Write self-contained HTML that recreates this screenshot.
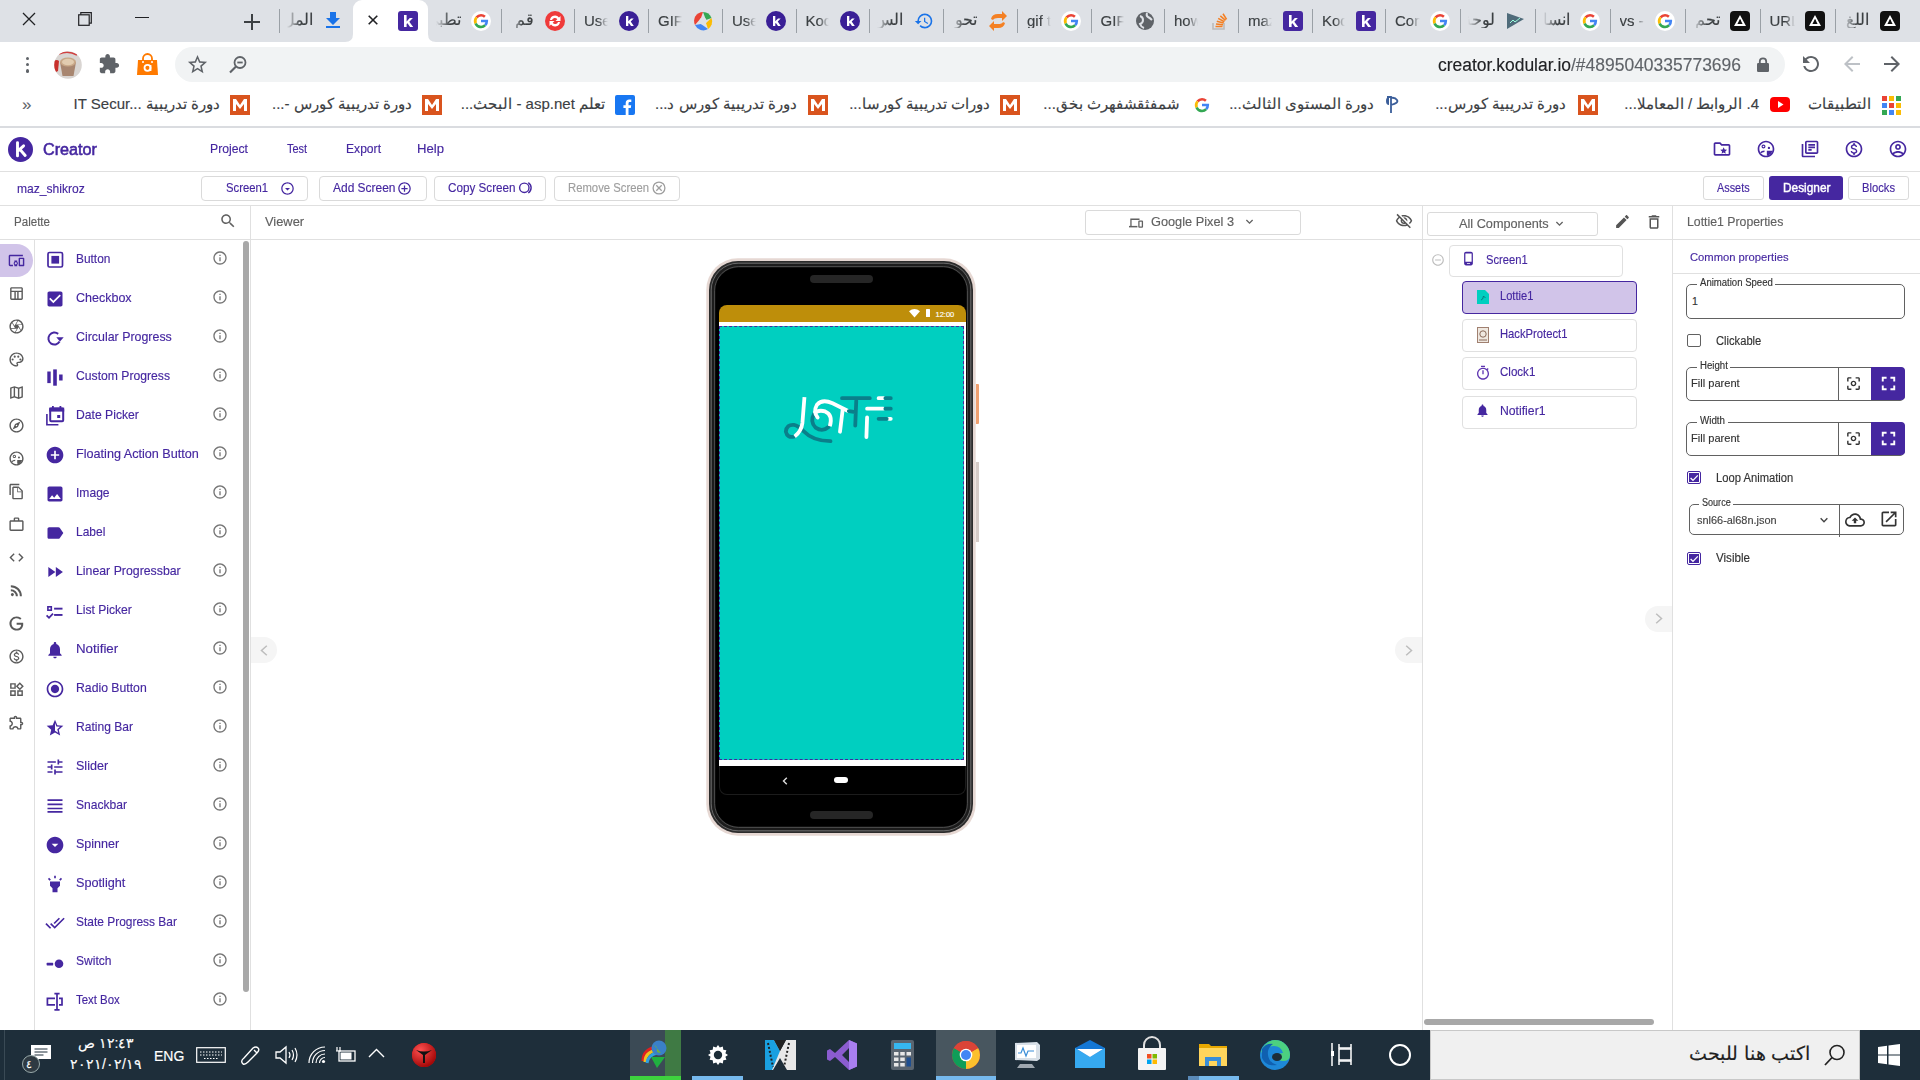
<!DOCTYPE html>
<html><head><meta charset="utf-8">
<style>
*{box-sizing:border-box;margin:0;padding:0}
html,body{width:1920px;height:1080px;overflow:hidden;background:#fff;font-family:"Liberation Sans",sans-serif;position:relative}
.a{position:absolute}
.t{position:absolute;white-space:nowrap;line-height:1;-webkit-text-stroke:0.15px currentColor}
svg{display:block;overflow:visible}
</style></head><body>
<div class="a" style="left:0px;top:0px;width:1920px;height:42px;background:#dee1e6"></div>
<svg class="a" style="left:22px;top:12px;" width="14" height="14" viewBox="0 0 14 14"><path d="M1 1l12 12M13 1L1 13" stroke="#202124" stroke-width="1.3"/></svg>
<svg class="a" style="left:78px;top:12px;" width="14" height="14" viewBox="0 0 14 14"><rect x="0.7" y="2.8" width="10.5" height="10.5" fill="none" stroke="#202124" stroke-width="1.2"/><path d="M2.8 2.8V.7h10.5v10.5h-2.1" fill="none" stroke="#202124" stroke-width="1.2"/></svg>
<div class="a" style="left:135px;top:17px;width:14px;height:1.3px;background:#202124"></div>
<svg class="a" style="left:243.5px;top:13.5px;" width="16" height="16" viewBox="0 0 16 16"><path d="M8 0v16M0 8h16" stroke="#3c4043" stroke-width="2"/></svg>
<div class="a" style="left:279px;top:9px;width:1px;height:24px;background:#9aa0a6"></div>
<div class="a" style="left:500.5px;top:9px;width:1px;height:24px;background:#9aa0a6"></div>
<div class="a" style="left:574px;top:9px;width:1px;height:24px;background:#9aa0a6"></div>
<div class="a" style="left:648px;top:9px;width:1px;height:24px;background:#9aa0a6"></div>
<div class="a" style="left:722px;top:9px;width:1px;height:24px;background:#9aa0a6"></div>
<div class="a" style="left:795.5px;top:9px;width:1px;height:24px;background:#9aa0a6"></div>
<div class="a" style="left:869px;top:9px;width:1px;height:24px;background:#9aa0a6"></div>
<div class="a" style="left:943.4px;top:9px;width:1px;height:24px;background:#9aa0a6"></div>
<div class="a" style="left:1017px;top:9px;width:1px;height:24px;background:#9aa0a6"></div>
<div class="a" style="left:1090.6px;top:9px;width:1px;height:24px;background:#9aa0a6"></div>
<div class="a" style="left:1164px;top:9px;width:1px;height:24px;background:#9aa0a6"></div>
<div class="a" style="left:1238px;top:9px;width:1px;height:24px;background:#9aa0a6"></div>
<div class="a" style="left:1312px;top:9px;width:1px;height:24px;background:#9aa0a6"></div>
<div class="a" style="left:1385px;top:9px;width:1px;height:24px;background:#9aa0a6"></div>
<div class="a" style="left:1459.5px;top:9px;width:1px;height:24px;background:#9aa0a6"></div>
<div class="a" style="left:1534.5px;top:9px;width:1px;height:24px;background:#9aa0a6"></div>
<div class="a" style="left:1609.5px;top:9px;width:1px;height:24px;background:#9aa0a6"></div>
<div class="a" style="left:1684.5px;top:9px;width:1px;height:24px;background:#9aa0a6"></div>
<div class="a" style="left:1759.5px;top:9px;width:1px;height:24px;background:#9aa0a6"></div>
<div class="a" style="left:1834.5px;top:9px;width:1px;height:24px;background:#9aa0a6"></div>
<div class="a" style="left:352.5px;top:0;width:75px;height:42px;background:#fff;border-radius:9px 9px 0 0"></div>
<svg class="a" style="left:344.5px;top:34px;" width="8" height="8" viewBox="0 0 8 8"><path d="M0 8Q8 8 8 0V8z" fill="#fff"/></svg>
<svg class="a" style="left:427.5px;top:34px;" width="8" height="8" viewBox="0 0 8 8"><path d="M8 8Q0 8 0 0V8z" fill="#fff"/></svg>
<svg class="a" style="left:325.0px;top:12px;" width="16" height="16" viewBox="0 0 16 16"><path d="M5 0h6v6h4l-7 7-7-7h4z" fill="#1a73e8"/><rect x="1" y="14" width="14" height="2" fill="#1a73e8"/></svg>
<div class="t" style="left:287px;top:12px;width:25.5px;font-size:16px;color:#3c4043;direction:rtl;text-align:right;overflow:hidden;-webkit-mask-image:linear-gradient(to right,transparent,#000 14px)">المل</div>
<svg class="a" style="left:398.0px;top:11px;" width="20" height="20" viewBox="0 0 20 20"><rect width="20" height="20" rx="3" fill="#4527a0"/><path d="M6 4h2.6v6.4L11.8 7h3.1l-3.6 3.7L15.2 16h-3.1l-2.6-3.8-.9.9V16H6z" fill="#fff"/></svg>
<svg class="a" style="left:471.0px;top:11px;" width="20" height="20" viewBox="0 0 20 20"><circle cx="10" cy="10" r="10" fill="#fff"/>
<path d="M10 4.2a5.8 5.8 0 0 1 3.9 1.5" fill="none" stroke="#ea4335" stroke-width="2.6"/>
<path d="M5.6 6.3a5.8 5.8 0 0 1 4.4-2.1" fill="none" stroke="#ea4335" stroke-width="2.6"/>
<path d="M4.6 12.4a5.8 5.8 0 0 1 1-6.1" fill="none" stroke="#fbbc05" stroke-width="2.6"/>
<path d="M14.2 14.1a5.8 5.8 0 0 1-9.6-1.7" fill="none" stroke="#34a853" stroke-width="2.6"/>
<path d="M10 10h5.8a5.8 5.8 0 0 1-1.6 4.1" fill="none" stroke="#4285f4" stroke-width="2.6"/></svg>
<div class="t" style="left:435.5px;top:12px;width:25.0px;font-size:16px;color:#3c4043;direction:rtl;text-align:right;overflow:hidden;-webkit-mask-image:linear-gradient(to right,transparent,#000 14px)">تطبي</div>
<svg class="a" style="left:544.5px;top:11px;" width="20" height="20" viewBox="0 0 20 20"><circle cx="10" cy="10" r="10" fill="#ef3a3a"/><path d="M5 9a5 5 0 0 1 9-2.5l1.5-1.5v5h-5l1.8-1.8A3 3 0 0 0 7 9zm10 2a5 5 0 0 1-9 2.5L4.5 15v-5h5l-1.8 1.8A3 3 0 0 0 13 11z" fill="#fff"/></svg>
<div class="t" style="left:508.5px;top:12px;width:25.5px;font-size:16px;color:#3c4043;direction:rtl;text-align:right;overflow:hidden;-webkit-mask-image:linear-gradient(to right,transparent,#000 14px)">قم ب</div>
<svg class="a" style="left:618.5px;top:11px;" width="20" height="20" viewBox="0 0 20 20"><circle cx="10" cy="10" r="10" fill="#3a1f96"/><path d="M7 5h2.3v5.3L12 7.6h2.7l-3 3L14.8 15H12l-2.1-3.1-.6.6V15H7z" fill="#fff"/></svg>
<div class="t" style="left:584px;top:13px;width:24px;font-size:15px;color:#3c4043;overflow:hidden;-webkit-mask-image:linear-gradient(to left,transparent,#000 10px)">Use</div>
<svg class="a" style="left:692.5px;top:11px;" width="20" height="20" viewBox="0 0 20 20"><path d="M10 1a9 9 0 0 1 8.5 6L13 9z" fill="#34a853"/><path d="M18.5 7A9 9 0 0 1 15 18l-2-6z" fill="#fbbc05"/><path d="M15 18A9 9 0 0 1 2 14l6-1z" fill="#4285f4"/><path d="M2 14A9 9 0 0 1 10 1L8 7z" fill="#ea4335"/><circle cx="10" cy="10" r="3.5" fill="#dee1e6"/></svg>
<div class="t" style="left:658px;top:13px;width:24px;font-size:15px;color:#3c4043;overflow:hidden;-webkit-mask-image:linear-gradient(to left,transparent,#000 10px)">GIF</div>
<svg class="a" style="left:766.0px;top:11px;" width="20" height="20" viewBox="0 0 20 20"><circle cx="10" cy="10" r="10" fill="#3a1f96"/><path d="M7 5h2.3v5.3L12 7.6h2.7l-3 3L14.8 15H12l-2.1-3.1-.6.6V15H7z" fill="#fff"/></svg>
<div class="t" style="left:732px;top:13px;width:23.5px;font-size:15px;color:#3c4043;overflow:hidden;-webkit-mask-image:linear-gradient(to left,transparent,#000 10px)">Use</div>
<svg class="a" style="left:839.5px;top:11px;" width="20" height="20" viewBox="0 0 20 20"><circle cx="10" cy="10" r="10" fill="#3a1f96"/><path d="M7 5h2.3v5.3L12 7.6h2.7l-3 3L14.8 15H12l-2.1-3.1-.6.6V15H7z" fill="#fff"/></svg>
<div class="t" style="left:805.5px;top:13px;width:23.5px;font-size:15px;color:#3c4043;overflow:hidden;-webkit-mask-image:linear-gradient(to left,transparent,#000 10px)">Kod</div>
<svg class="a" style="left:913.9px;top:11px;" width="20" height="20" viewBox="0 0 24 24"><path fill="#1a73e8" d="M13 3a9 9 0 0 0-9 9H1l3.89 3.89.07.14L9 12H6c0-3.87 3.13-7 7-7s7 3.13 7 7-3.13 7-7 7c-1.93 0-3.68-.79-4.94-2.06l-1.42 1.42A8.954 8.954 0 0 0 13 21a9 9 0 0 0 0-18zm-1 5v5l4.28 2.54.72-1.21-3.5-2.08V8H12z"/></svg>
<div class="t" style="left:877px;top:12px;width:26.399999999999977px;font-size:16px;color:#3c4043;direction:rtl;text-align:right;overflow:hidden;-webkit-mask-image:linear-gradient(to right,transparent,#000 14px)">الس</div>
<svg class="a" style="left:987.5px;top:11px;" width="20" height="20" viewBox="0 0 20 20"><path d="M3 8q1-5 7-5h4V0l5 5-5 5V7h-4q-4 0-5 2z" fill="#f48024"/><path d="M17 12q-1 5-7 5H6v3l-5-5 5-5v3h4q4 0 5-2z" fill="#f48024"/></svg>
<div class="t" style="left:951.4px;top:12px;width:25.600000000000023px;font-size:16px;color:#3c4043;direction:rtl;text-align:right;overflow:hidden;-webkit-mask-image:linear-gradient(to right,transparent,#000 14px)">تحو</div>
<svg class="a" style="left:1061.1px;top:11px;" width="20" height="20" viewBox="0 0 20 20"><circle cx="10" cy="10" r="10" fill="#fff"/>
<path d="M10 4.2a5.8 5.8 0 0 1 3.9 1.5" fill="none" stroke="#ea4335" stroke-width="2.6"/>
<path d="M5.6 6.3a5.8 5.8 0 0 1 4.4-2.1" fill="none" stroke="#ea4335" stroke-width="2.6"/>
<path d="M4.6 12.4a5.8 5.8 0 0 1 1-6.1" fill="none" stroke="#fbbc05" stroke-width="2.6"/>
<path d="M14.2 14.1a5.8 5.8 0 0 1-9.6-1.7" fill="none" stroke="#34a853" stroke-width="2.6"/>
<path d="M10 10h5.8a5.8 5.8 0 0 1-1.6 4.1" fill="none" stroke="#4285f4" stroke-width="2.6"/></svg>
<div class="t" style="left:1027px;top:13px;width:23.59999999999991px;font-size:15px;color:#3c4043;overflow:hidden;-webkit-mask-image:linear-gradient(to left,transparent,#000 10px)">gif t</div>
<svg class="a" style="left:1134.5px;top:11px;" width="20" height="20" viewBox="0 0 20 20"><circle cx="10" cy="10" r="9" fill="#5f6368"/><path d="M5 5q3 1 3 4t-3 4q1 3 4 4M12 2q-1 3 1 4t4 3" fill="none" stroke="#dee1e6" stroke-width="2"/></svg>
<div class="t" style="left:1100.6px;top:13px;width:23.40000000000009px;font-size:15px;color:#3c4043;overflow:hidden;-webkit-mask-image:linear-gradient(to left,transparent,#000 10px)">GIF</div>
<svg class="a" style="left:1208.5px;top:11px;" width="20" height="20" viewBox="0 0 20 20"><path d="M4 12v6h11v-6" fill="none" stroke="#bcbbbb" stroke-width="1.6"/><path d="M6.5 15.5h7M7 13l7 .7M7.8 10.2l6.8 1.8M9.2 7.4l6.2 3.4M11.3 4.8l5.2 4.6M14 2.8l3.6 5.6" stroke="#f48024" stroke-width="1.6"/></svg>
<div class="t" style="left:1174px;top:13px;width:24px;font-size:15px;color:#3c4043;overflow:hidden;-webkit-mask-image:linear-gradient(to left,transparent,#000 10px)">how</div>
<svg class="a" style="left:1282.5px;top:11px;" width="20" height="20" viewBox="0 0 20 20"><rect width="20" height="20" rx="3" fill="#4527a0"/><path d="M6 4h2.6v6.4L11.8 7h3.1l-3.6 3.7L15.2 16h-3.1l-2.6-3.8-.9.9V16H6z" fill="#fff"/></svg>
<div class="t" style="left:1248px;top:13px;width:24px;font-size:15px;color:#3c4043;overflow:hidden;-webkit-mask-image:linear-gradient(to left,transparent,#000 10px)">maz</div>
<svg class="a" style="left:1355.5px;top:11px;" width="20" height="20" viewBox="0 0 20 20"><rect width="20" height="20" rx="3" fill="#4527a0"/><path d="M6 4h2.6v6.4L11.8 7h3.1l-3.6 3.7L15.2 16h-3.1l-2.6-3.8-.9.9V16H6z" fill="#fff"/></svg>
<div class="t" style="left:1322px;top:13px;width:23px;font-size:15px;color:#3c4043;overflow:hidden;-webkit-mask-image:linear-gradient(to left,transparent,#000 10px)">Kod</div>
<svg class="a" style="left:1430.0px;top:11px;" width="20" height="20" viewBox="0 0 20 20"><circle cx="10" cy="10" r="10" fill="#fff"/>
<path d="M10 4.2a5.8 5.8 0 0 1 3.9 1.5" fill="none" stroke="#ea4335" stroke-width="2.6"/>
<path d="M5.6 6.3a5.8 5.8 0 0 1 4.4-2.1" fill="none" stroke="#ea4335" stroke-width="2.6"/>
<path d="M4.6 12.4a5.8 5.8 0 0 1 1-6.1" fill="none" stroke="#fbbc05" stroke-width="2.6"/>
<path d="M14.2 14.1a5.8 5.8 0 0 1-9.6-1.7" fill="none" stroke="#34a853" stroke-width="2.6"/>
<path d="M10 10h5.8a5.8 5.8 0 0 1-1.6 4.1" fill="none" stroke="#4285f4" stroke-width="2.6"/></svg>
<div class="t" style="left:1395px;top:13px;width:24.5px;font-size:15px;color:#3c4043;overflow:hidden;-webkit-mask-image:linear-gradient(to left,transparent,#000 10px)">Con</div>
<svg class="a" style="left:1505.0px;top:11px;" width="20" height="20" viewBox="0 0 20 20"><path d="M2 2l17 6-17 10z" fill="#4f6b7a"/><path d="M5 12l3-3 2 2 5-4" fill="none" stroke="#9fd" stroke-width="1"/></svg>
<div class="t" style="left:1467.5px;top:12px;width:27.0px;font-size:16px;color:#3c4043;direction:rtl;text-align:right;overflow:hidden;-webkit-mask-image:linear-gradient(to right,transparent,#000 14px)">لوحة</div>
<svg class="a" style="left:1580.0px;top:11px;" width="20" height="20" viewBox="0 0 20 20"><circle cx="10" cy="10" r="10" fill="#fff"/>
<path d="M10 4.2a5.8 5.8 0 0 1 3.9 1.5" fill="none" stroke="#ea4335" stroke-width="2.6"/>
<path d="M5.6 6.3a5.8 5.8 0 0 1 4.4-2.1" fill="none" stroke="#ea4335" stroke-width="2.6"/>
<path d="M4.6 12.4a5.8 5.8 0 0 1 1-6.1" fill="none" stroke="#fbbc05" stroke-width="2.6"/>
<path d="M14.2 14.1a5.8 5.8 0 0 1-9.6-1.7" fill="none" stroke="#34a853" stroke-width="2.6"/>
<path d="M10 10h5.8a5.8 5.8 0 0 1-1.6 4.1" fill="none" stroke="#4285f4" stroke-width="2.6"/></svg>
<div class="t" style="left:1542.5px;top:12px;width:27.0px;font-size:16px;color:#3c4043;direction:rtl;text-align:right;overflow:hidden;-webkit-mask-image:linear-gradient(to right,transparent,#000 14px)">انسا</div>
<svg class="a" style="left:1655.0px;top:11px;" width="20" height="20" viewBox="0 0 20 20"><circle cx="10" cy="10" r="10" fill="#fff"/>
<path d="M10 4.2a5.8 5.8 0 0 1 3.9 1.5" fill="none" stroke="#ea4335" stroke-width="2.6"/>
<path d="M5.6 6.3a5.8 5.8 0 0 1 4.4-2.1" fill="none" stroke="#ea4335" stroke-width="2.6"/>
<path d="M4.6 12.4a5.8 5.8 0 0 1 1-6.1" fill="none" stroke="#fbbc05" stroke-width="2.6"/>
<path d="M14.2 14.1a5.8 5.8 0 0 1-9.6-1.7" fill="none" stroke="#34a853" stroke-width="2.6"/>
<path d="M10 10h5.8a5.8 5.8 0 0 1-1.6 4.1" fill="none" stroke="#4285f4" stroke-width="2.6"/></svg>
<div class="t" style="left:1619.5px;top:13px;width:25.0px;font-size:15px;color:#3c4043;overflow:hidden;-webkit-mask-image:linear-gradient(to left,transparent,#000 10px)">vs -</div>
<svg class="a" style="left:1730.0px;top:11px;" width="20" height="20" viewBox="0 0 20 20"><rect width="20" height="20" rx="4" fill="#111"/><path d="M10 4l6 11H4zm0 4l-2.6 5h5.2z" fill="#fff"/><path d="M10 8l1.2 2.2-2.4 2.8z" fill="#111"/></svg>
<div class="t" style="left:1692.5px;top:12px;width:27.0px;font-size:16px;color:#3c4043;direction:rtl;text-align:right;overflow:hidden;-webkit-mask-image:linear-gradient(to right,transparent,#000 14px)">تحم</div>
<svg class="a" style="left:1805.0px;top:11px;" width="20" height="20" viewBox="0 0 20 20"><rect width="20" height="20" rx="4" fill="#111"/><path d="M10 4l6 11H4zm0 4l-2.6 5h5.2z" fill="#fff"/><path d="M10 8l1.2 2.2-2.4 2.8z" fill="#111"/></svg>
<div class="t" style="left:1769.5px;top:13px;width:25.0px;font-size:15px;color:#3c4043;overflow:hidden;-webkit-mask-image:linear-gradient(to left,transparent,#000 10px)">URL</div>
<svg class="a" style="left:1879.5px;top:11px;" width="20" height="20" viewBox="0 0 20 20"><rect width="20" height="20" rx="4" fill="#111"/><path d="M10 4l6 11H4zm0 4l-2.6 5h5.2z" fill="#fff"/><path d="M10 8l1.2 2.2-2.4 2.8z" fill="#111"/></svg>
<div class="t" style="left:1842.5px;top:12px;width:26.5px;font-size:16px;color:#3c4043;direction:rtl;text-align:right;overflow:hidden;-webkit-mask-image:linear-gradient(to right,transparent,#000 14px)">اللغ</div>
<svg class="a" style="left:368px;top:15px;" width="10" height="10" viewBox="0 0 10 10"><path d="M.7.7l8.6 8.6M9.3.7L.7 9.3" stroke="#202124" stroke-width="1.6"/></svg>
<div class="a" style="left:0px;top:42px;width:1920px;height:44px;background:#fff"></div>
<div class="a" style="left:25.7px;top:56.8px;width:3.4px;height:3.4px;background:#5f6368;border-radius:50%"></div>
<div class="a" style="left:25.7px;top:62.8px;width:3.4px;height:3.4px;background:#5f6368;border-radius:50%"></div>
<div class="a" style="left:25.7px;top:69.2px;width:3.4px;height:3.4px;background:#5f6368;border-radius:50%"></div>
<svg class="a" style="left:54px;top:51px;" width="28" height="28" viewBox="0 0 28 28"><defs><clipPath id="av"><circle cx="14" cy="14" r="13.8"/></clipPath></defs><g clip-path="url(#av)"><rect width="28" height="28" fill="#d9d5d2"/><path d="M0 10q3-2 5 0l-1 10-4 2z" fill="#c9302c"/><path d="M5 3q9-4 18 1" stroke="#d04040" stroke-width="1.5" fill="none"/><path d="M6 11l2.5 14h11l2.5-14z" fill="#a88670"/><ellipse cx="14" cy="11" rx="8" ry="4.5" fill="#c8a888"/><ellipse cx="14" cy="11" rx="6" ry="3.2" fill="#e2ccb0"/></g></svg>
<svg class="a" style="left:98px;top:53px;" width="22" height="22" viewBox="0 0 24 24"><path fill="#5f6368" d="M20.5 11H19V7c0-1.1-.9-2-2-2h-4V3.5C13 2.12 11.88 1 10.5 1S8 2.12 8 3.5V5H4c-1.1 0-1.99.9-1.99 2v3.8H3.5c1.49 0 2.7 1.21 2.7 2.7s-1.21 2.7-2.7 2.7H2V20c0 1.1.9 2 2 2h3.8v-1.5c0-1.49 1.21-2.7 2.7-2.7 1.49 0 2.7 1.21 2.7 2.7V22H17c1.1 0 2-.9 2-2v-4h1.5c1.38 0 2.5-1.12 2.5-2.5S21.88 11 20.5 11z"/></svg>
<svg class="a" style="left:137px;top:54px;" width="21" height="21" viewBox="0 0 21 21"><path d="M1 6h19l1 15H0z" fill="#ff7a00"/><path d="M6 7V4.5a4.5 4.5 0 0 1 9 0V7" fill="none" stroke="#ff7a00" stroke-width="1.8"/><circle cx="6" cy="8" r="1" fill="#fff"/><circle cx="15" cy="8" r="1" fill="#fff"/><circle cx="10.5" cy="13.8" r="3" fill="none" stroke="#fff" stroke-width="1.8"/><path d="M13.5 11v6" stroke="#fff" stroke-width="1.8"/></svg>
<div class="a" style="left:175px;top:47px;width:1610px;height:35px;background:#f1f3f4;border-radius:17.5px"></div>
<svg class="a" style="left:186px;top:53px;" width="23" height="23" viewBox="0 0 24 24"><path fill="#5f6368" d="M22 9.24l-7.19-.62L12 2 9.19 8.63 2 9.24l5.46 4.73L5.82 21 12 17.27 18.18 21l-1.63-7.03L22 9.24zM12 15.4l-3.76 2.27 1-4.28-3.32-2.88 4.38-.38L12 6.1l1.71 4.04 4.38.38-3.32 2.88 1 4.28L12 15.4z"/></svg>
<svg class="a" style="left:229px;top:56px;" width="18" height="17" viewBox="0 0 18 17"><circle cx="11" cy="6.5" r="5.5" fill="none" stroke="#5f6368" stroke-width="1.8"/><path d="M8.3 6.5h5.4" stroke="#5f6368" stroke-width="1.8"/><path d="M7 10.5L1 16.5" stroke="#5f6368" stroke-width="2.2"/></svg>
<div class="t" style="left:1437.50px;top:56px;font-size:18px;color:#202124;font-weight:normal;transform:scaleX(0.9703);transform-origin:0 0;">creator.kodular.io<span style="color:#5f6368">/#4895040335773696</span></div>
<svg class="a" style="left:1757px;top:57px;" width="12" height="15" viewBox="0 0 12 15"><rect x="0" y="6" width="12" height="9" rx="1.2" fill="#5f6368"/><path d="M2.8 6.5V4.5a3.2 3.2 0 0 1 6.4 0v2" fill="none" stroke="#5f6368" stroke-width="1.8"/></svg>
<svg class="a" style="left:1799px;top:52px;transform:scaleX(-1)" width="24" height="24" viewBox="0 0 24 24"><path fill="#5f6368" d="M17.65 6.35A7.958 7.958 0 0 0 12 4c-4.42 0-7.99 3.58-7.99 8s3.57 8 7.99 8c3.73 0 6.84-2.55 7.73-6h-2.08A5.99 5.99 0 0 1 12 18c-3.31 0-6-2.69-6-6s2.69-6 6-6c1.66 0 3.14.69 4.22 1.78L13 11h7V4l-2.35 2.35z"/></svg>
<svg class="a" style="left:1840px;top:52px;" width="24" height="24" viewBox="0 0 24 24"><path fill="#bdc1c6" d="M20 11H7.83l5.59-5.59L12 4l-8 8 8 8 1.41-1.41L7.83 13H20v-2z"/></svg>
<svg class="a" style="left:1880px;top:52px;" width="24" height="24" viewBox="0 0 24 24"><path fill="#5f6368" d="M12 4l-1.41 1.41L16.17 11H4v2h12.17l-5.58 5.59L12 20l8-8z"/></svg>
<div class="a" style="left:0px;top:126px;width:1920px;height:2px;background:#dadce0"></div>
<div class="t" style="left:22.00px;top:96px;font-size:17px;color:#5f6368;font-weight:normal;">»</div>
<div class="t" style="right:1700px;top:96px;font-size:15px;color:#3c4043;direction:rtl"><span dir="ltr" style="unicode-bidi:isolate">IT Secur... <span dir="rtl">دورة تدريبية</span></span></div>
<svg class="a" style="left:230px;top:95px;" width="20" height="20" viewBox="0 0 20 20"><rect width="20" height="20" fill="#d9541e"/><path d="M3 16V4h3l4 6 4-6h3v12h-3V9l-4 5-4-5v7z" fill="#fff"/></svg>
<div class="t" style="right:1508px;top:96px;font-size:15px;color:#3c4043;direction:rtl">دورة تدريبية كورس -...</div>
<svg class="a" style="left:422px;top:95px;" width="20" height="20" viewBox="0 0 20 20"><rect width="20" height="20" fill="#d9541e"/><path d="M3 16V4h3l4 6 4-6h3v12h-3V9l-4 5-4-5v7z" fill="#fff"/></svg>
<div class="t" style="right:1315px;top:96px;font-size:15px;color:#3c4043;direction:rtl">تعلم asp.net - البحث...</div>
<svg class="a" style="left:615px;top:95px;" width="20" height="20" viewBox="0 0 20 20"><rect width="20" height="20" rx="2" fill="#1877f2"/><path d="M13.5 20v-7h2.3l.4-2.8h-2.7V8.5c0-.8.3-1.4 1.4-1.4h1.4V4.6c-.3 0-1.2-.1-2.1-.1-2.1 0-3.5 1.3-3.5 3.6v2.1H8.4V13h2.3v7z" fill="#fff"/></svg>
<div class="t" style="right:1123px;top:96px;font-size:15px;color:#3c4043;direction:rtl">دورة تدريبية كورس د...</div>
<svg class="a" style="left:808px;top:95px;" width="20" height="20" viewBox="0 0 20 20"><rect width="20" height="20" fill="#d9541e"/><path d="M3 16V4h3l4 6 4-6h3v12h-3V9l-4 5-4-5v7z" fill="#fff"/></svg>
<div class="t" style="right:930px;top:96px;font-size:15px;color:#3c4043;direction:rtl">دورات تدريبية كورسا...</div>
<svg class="a" style="left:1000px;top:95px;" width="20" height="20" viewBox="0 0 20 20"><rect width="20" height="20" fill="#d9541e"/><path d="M3 16V4h3l4 6 4-6h3v12h-3V9l-4 5-4-5v7z" fill="#fff"/></svg>
<div class="t" style="right:740px;top:96px;font-size:15px;color:#3c4043;direction:rtl">شمفثقشفهرث بخق...</div>
<svg class="a" style="left:1192px;top:95px;" width="20" height="20" viewBox="0 0 20 20"><circle cx="10" cy="10" r="10" fill="#fff"/>
<path d="M10 4.2a5.8 5.8 0 0 1 3.9 1.5" fill="none" stroke="#ea4335" stroke-width="2.6"/>
<path d="M5.6 6.3a5.8 5.8 0 0 1 4.4-2.1" fill="none" stroke="#ea4335" stroke-width="2.6"/>
<path d="M4.6 12.4a5.8 5.8 0 0 1 1-6.1" fill="none" stroke="#fbbc05" stroke-width="2.6"/>
<path d="M14.2 14.1a5.8 5.8 0 0 1-9.6-1.7" fill="none" stroke="#34a853" stroke-width="2.6"/>
<path d="M10 10h5.8a5.8 5.8 0 0 1-1.6 4.1" fill="none" stroke="#4285f4" stroke-width="2.6"/></svg>
<div class="t" style="right:546px;top:96px;font-size:15px;color:#3c4043;direction:rtl">دورة المستوى الثالث...</div>
<svg class="a" style="left:1385px;top:96px;" width="14" height="18" viewBox="0 0 14 18"><path d="M2 1h4v16M6 2q4-1 6 2t-6 5" fill="none" stroke="#3b5e9a" stroke-width="1.8"/><path d="M4 1v8q-3 0-3-4t3-4" fill="#3b5e9a"/></svg>
<div class="t" style="right:354px;top:96px;font-size:15px;color:#3c4043;direction:rtl">دورة تدريبية كورس...</div>
<svg class="a" style="left:1577.5px;top:95px;" width="20" height="20" viewBox="0 0 20 20"><rect width="20" height="20" fill="#d9541e"/><path d="M3 16V4h3l4 6 4-6h3v12h-3V9l-4 5-4-5v7z" fill="#fff"/></svg>
<div class="t" style="right:161px;top:96px;font-size:15px;color:#3c4043;direction:rtl">4. الروابط / المعاملا...</div>
<svg class="a" style="left:1770px;top:97px;" width="20" height="15" viewBox="0 0 20 15"><rect width="20" height="15" rx="4" fill="#f00"/><path d="M8 4l5.5 3.5L8 11z" fill="#fff"/></svg>
<div class="t" style="right:49px;top:96px;font-size:15px;color:#3c4043;direction:rtl">التطبيقات</div>
<div class="a" style="left:1882px;top:96px;width:4.5px;height:4.5px;background:#ea4335"></div>
<div class="a" style="left:1889px;top:96px;width:4.5px;height:4.5px;background:#fbbc05"></div>
<div class="a" style="left:1896px;top:96px;width:4.5px;height:4.5px;background:#34a853"></div>
<div class="a" style="left:1882px;top:103px;width:4.5px;height:4.5px;background:#4285f4"></div>
<div class="a" style="left:1889px;top:103px;width:4.5px;height:4.5px;background:#ea4335"></div>
<div class="a" style="left:1896px;top:103px;width:4.5px;height:4.5px;background:#fbbc05"></div>
<div class="a" style="left:1882px;top:110px;width:4.5px;height:4.5px;background:#34a853"></div>
<div class="a" style="left:1889px;top:110px;width:4.5px;height:4.5px;background:#4285f4"></div>
<div class="a" style="left:1896px;top:110px;width:4.5px;height:4.5px;background:#fbbc05"></div>
<div class="a" style="left:0px;top:171px;width:1920px;height:1px;background:#e0e0e0"></div>
<div class="a" style="left:8px;top:137px;width:25px;height:25px;background:#4527a0;border-radius:50%"></div>
<svg class="a" style="left:8px;top:137px;" width="25" height="25" viewBox="0 0 25 25"><path d="M9.5 5.6v13.3M10 13.8l5.6-5M11.8 12.2l5.4 6.3" fill="none" stroke="#fff" stroke-width="2.9" stroke-linecap="round" stroke-linejoin="round"/></svg>
<div class="t" style="left:43.00px;top:141px;font-size:17px;color:#4527a0;font-weight:normal;transform:scaleX(0.9526);transform-origin:0 0;-webkit-text-stroke:0.6px currentColor;">Creator</div>
<div class="t" style="left:210.00px;top:142px;font-size:13px;color:#4527a0;font-weight:normal;transform:scaleX(0.9392);transform-origin:0 0;">Project</div>
<div class="t" style="left:287.00px;top:142px;font-size:13px;color:#4527a0;font-weight:normal;transform:scaleX(0.8431);transform-origin:0 0;">Test</div>
<div class="t" style="left:346.00px;top:142px;font-size:13px;color:#4527a0;font-weight:normal;transform:scaleX(0.9315);transform-origin:0 0;">Export</div>
<div class="t" style="left:416.80px;top:142px;font-size:13px;color:#4527a0;font-weight:normal;transform:scaleX(1.0098);transform-origin:0 0;">Help</div>
<svg class="a" style="left:1712px;top:138.5px;" width="20" height="20" viewBox="0 0 24 24"><path fill="#4527a0" d="M20 6h-8l-2-2H4c-1.1 0-1.99.9-1.99 2L2 18c0 1.1.9 2 2 2h16c1.1 0 2-.9 2-2V8c0-1.1-.9-2-2-2zm0 12H4V6h5.17l2 2H20v10zm-4.1-3.1l.6 2.9-2.5-1.5-2.5 1.5.6-2.9-2.2-1.9 2.9-.3L14 10l1.2 2.7 2.9.3z"/></svg>
<svg class="a" style="left:1756px;top:138.5px;" width="20" height="20" viewBox="0 0 24 24"><path fill="#4527a0" d="M12 2C6.48 2 2 6.48 2 12s4.48 10 10 10 10-4.48 10-10S17.52 2 12 2zm0 18c-4.41 0-8-3.59-8-8s3.59-8 8-8 8 3.59 8 8-3.59 8-8 8zM9 6.6a2.4 2.4 0 1 1 0 4.8 2.4 2.4 0 0 1 0-4.8zm0 1.4a1 1 0 1 0 0 2 1 1 0 0 0 0-2zm6.5 1.3a1.4 1.4 0 1 1 0 2.8 1.4 1.4 0 0 1 0-2.8zM13 14h6.8c-.6 2.8-3 5-5.8 5.9L13 19zM4.6 16.2q2.3-2.4 5.6-2.3v1.6q-2.6 0-4.6 1.9z"/></svg>
<svg class="a" style="left:1800px;top:138.5px;" width="20" height="20" viewBox="0 0 24 24"><path fill="#4527a0" d="M4 6H2v14c0 1.1.9 2 2 2h14v-2H4V6zm16-4H8c-1.1 0-2 .9-2 2v12c0 1.1.9 2 2 2h12c1.1 0 2-.9 2-2V4c0-1.1-.9-2-2-2zm0 14H8V4h12v12zM10 9h8v2h-8zm0 3h4v2h-4zm0-6h8v2h-8z"/></svg>
<svg class="a" style="left:1844px;top:138.5px;" width="20" height="20" viewBox="0 0 24 24"><path fill="#4527a0" d="M12 2C6.48 2 2 6.48 2 12s4.48 10 10 10 10-4.48 10-10S17.52 2 12 2zm0 18c-4.41 0-8-3.59-8-8s3.59-8 8-8 8 3.59 8 8-3.59 8-8 8zm.31-8.86c-1.77-.45-2.34-.94-2.34-1.67 0-.84.79-1.43 2.1-1.43 1.38 0 1.9.66 1.94 1.64h1.71c-.05-1.34-.87-2.57-2.49-2.97V5H10.9v1.69c-1.51.32-2.72 1.3-2.72 2.81 0 1.79 1.49 2.69 3.66 3.21 1.95.46 2.34 1.15 2.34 1.87 0 .53-.39 1.39-2.1 1.39-1.6 0-2.23-.72-2.32-1.64H8.04c.1 1.7 1.36 2.66 2.86 2.97V19h2.34v-1.67c1.52-.29 2.72-1.16 2.73-2.77-.01-2.2-1.9-2.96-3.66-3.42z"/></svg>
<svg class="a" style="left:1888px;top:138.5px;" width="20" height="20" viewBox="0 0 24 24"><path fill="#4527a0" d="M12 2C6.48 2 2 6.48 2 12s4.48 10 10 10 10-4.48 10-10S17.52 2 12 2zM7.07 18.28c.43-.9 3.05-1.78 4.93-1.78s4.51.88 4.93 1.78C15.57 19.36 13.86 20 12 20s-3.57-.64-4.93-1.72zm11.29-1.45c-1.43-1.74-4.9-2.33-6.36-2.33s-4.93.59-6.36 2.33C4.62 15.49 4 13.82 4 12c0-4.41 3.59-8 8-8s8 3.59 8 8c0 1.82-.62 3.49-1.64 4.83zM12 6c-1.94 0-3.5 1.56-3.5 3.5S10.06 13 12 13s3.5-1.56 3.5-3.5S13.94 6 12 6zm0 5c-.83 0-1.5-.67-1.5-1.5S11.17 8 12 8s1.5.67 1.5 1.5S12.83 11 12 11z"/></svg>
<div class="a" style="left:0px;top:205px;width:1920px;height:1px;background:#e0e0e0"></div>
<div class="t" style="left:16.60px;top:182px;font-size:13px;color:#4527a0;font-weight:normal;transform:scaleX(0.9292);transform-origin:0 0;">maz_shikroz</div>
<div class="a" style="left:201px;top:176px;width:107px;height:25px;border:1px solid #dadada;border-radius:4px"></div>
<div class="t" style="left:226.00px;top:182px;font-size:12.5px;color:#4527a0;font-weight:normal;transform:scaleX(0.9021);transform-origin:0 0;">Screen1</div>
<svg class="a" style="left:279.9px;top:181px;" width="15" height="15" viewBox="0 0 24 24"><path fill="#4527a0" d="M12 2C6.48 2 2 6.48 2 12s4.48 10 10 10 10-4.48 10-10S17.52 2 12 2zm0 18c-4.41 0-8-3.59-8-8s3.59-8 8-8 8 3.59 8 8-3.59 8-8 8zm0-5l-4-4h8z"/></svg>
<div class="a" style="left:319px;top:176px;width:108px;height:25px;border:1px solid #dadada;border-radius:4px"></div>
<div class="t" style="left:333.00px;top:182px;font-size:12.5px;color:#4527a0;font-weight:normal;transform:scaleX(0.9568);transform-origin:0 0;">Add Screen</div>
<svg class="a" style="left:397.0px;top:181px;" width="15" height="15" viewBox="0 0 24 24"><path fill="#4527a0" d="M13 7h-2v4H7v2h4v4h2v-4h4v-2h-4V7zm-1-5C6.48 2 2 6.48 2 12s4.48 10 10 10 10-4.48 10-10S17.52 2 12 2zm0 18c-4.41 0-8-3.59-8-8s3.59-8 8-8 8 3.59 8 8-3.59 8-8 8z"/></svg>
<div class="a" style="left:434px;top:176px;width:112px;height:25px;border:1px solid #dadada;border-radius:4px"></div>
<div class="t" style="left:448.40px;top:182px;font-size:12.5px;color:#4527a0;font-weight:normal;transform:scaleX(0.9341);transform-origin:0 0;">Copy Screen</div>
<svg class="a" style="left:517.5px;top:181px;" width="16" height="14" viewBox="0 0 16 14"><circle cx="6.3" cy="6.8" r="4.7" fill="none" stroke="#4527a0" stroke-width="1.4"/><path d="M10.3 1.6A6.2 6.2 0 0 1 10.3 12" fill="none" stroke="#4527a0" stroke-width="1.4"/></svg>
<div class="a" style="left:554px;top:176px;width:126px;height:25px;border:1px solid #dadada;border-radius:4px"></div>
<div class="t" style="left:568.00px;top:182px;font-size:12.5px;color:#9e9e9e;font-weight:normal;transform:scaleX(0.9037);transform-origin:0 0;">Remove Screen</div>
<svg class="a" style="left:652.3px;top:180.5px;" width="14" height="14" viewBox="0 0 14 14"><circle cx="7" cy="7" r="5.9" fill="none" stroke="#9e9e9e" stroke-width="1.3"/><path d="M4.3 4.3l5.4 5.4M9.7 4.3l-5.4 5.4" stroke="#9e9e9e" stroke-width="1.3"/></svg>
<div class="a" style="left:1703px;top:176px;width:61px;height:24px;background:#fff;border:1px solid #dadada;border-radius:3px"></div>
<div class="t" style="left:1717.40px;top:182px;font-size:12.5px;color:#4527a0;font-weight:normal;transform:scaleX(0.8690);transform-origin:0 0;">Assets</div>
<div class="a" style="left:1769px;top:176px;width:74px;height:24px;background:#4527a0;border:none;border-radius:3px"></div>
<div class="t" style="left:1782.70px;top:182px;font-size:12.5px;color:#fff;font-weight:normal;transform:scaleX(0.9495);transform-origin:0 0;-webkit-text-stroke:0.45px currentColor;">Designer</div>
<div class="a" style="left:1847.5px;top:176px;width:61.5px;height:24px;background:#fff;border:1px solid #dadada;border-radius:3px"></div>
<div class="t" style="left:1862.00px;top:182px;font-size:12.5px;color:#4527a0;font-weight:normal;transform:scaleX(0.8963);transform-origin:0 0;">Blocks</div>
<div class="a" style="left:0px;top:239px;width:1920px;height:1px;background:#e0e0e0"></div>
<div class="t" style="left:13.60px;top:216px;font-size:12.5px;color:#616161;font-weight:normal;transform:scaleX(0.9250);transform-origin:0 0;">Palette</div>
<svg class="a" style="left:219px;top:212px;" width="18" height="18" viewBox="0 0 24 24"><path fill="#616161" d="M15.5 14h-.79l-.28-.27C15.41 12.59 16 11.11 16 9.5 16 5.91 13.09 3 9.5 3S3 5.91 3 9.5 5.91 16 9.5 16c1.61 0 3.09-.59 4.23-1.57l.27.28v.79l5 4.99L20.49 19l-4.99-5zm-6 0C7.01 14 5 11.99 5 9.5S7.01 5 9.5 5 14 7.01 14 9.5 11.99 14 9.5 14z"/></svg>
<div class="t" style="left:265.40px;top:216px;font-size:12.5px;color:#616161;font-weight:normal;transform:scaleX(1.0294);transform-origin:0 0;">Viewer</div>
<div class="a" style="left:1084.5px;top:210px;width:216px;height:25px;border:1px solid #dadada;border-radius:3px"></div>
<svg class="a" style="left:1129px;top:217.5px;" width="14" height="10" viewBox="0 0 14 10"><path d="M1.3.6h9.2v1.3H2.6v6.1H1.3z" fill="#616161"/><path d="M0 7.9h8.4v1.5H0z" fill="#616161"/><rect x="9.9" y="3.1" width="3.5" height="6.1" rx=".4" fill="none" stroke="#616161" stroke-width="1.3"/></svg>
<div class="t" style="left:1151.00px;top:216px;font-size:12.5px;color:#616161;font-weight:normal;transform:scaleX(1.0209);transform-origin:0 0;">Google Pixel 3</div>
<svg class="a" style="left:1243px;top:215px;" width="13" height="13" viewBox="0 0 24 24"><path fill="#616161" d="M16.9 8.3L12 13.2 7.1 8.3 5.4 10l6.6 6.6 6.6-6.6z"/></svg>
<svg class="a" style="left:1395px;top:212px;" width="18" height="18" viewBox="0 0 24 24"><path fill="#555" d="M12 6c3.79 0 7.17 2.13 8.82 5.5-.59 1.22-1.42 2.27-2.41 3.12l1.41 1.41c1.39-1.23 2.49-2.77 3.18-4.53C21.27 7.11 17 4 12 4c-1.27 0-2.49.2-3.64.57l1.65 1.65C10.66 6.09 11.32 6 12 6zm-1.07 1.14L13 9.21c.57.25 1.03.71 1.28 1.28l2.07 2.07c.08-.34.14-.7.14-1.07C16.5 9.01 14.48 7 12 7c-.37 0-.72.05-1.07.14zM2.01 3.87l2.68 2.68C3.06 7.83 1.77 9.53 1 11.5 2.730 15.89 7 19 12 19c1.52 0 2.98-.29 4.32-.82l3.42 3.42 1.41-1.41L3.42 2.45 2.01 3.87zm7.5 7.5l2.610 2.61c-.04.01-.08.02-.12.02-1.38 0-2.5-1.12-2.5-2.5 0-.05.01-.08.01-.13zm-3.4-3.4l1.75 1.75c-.23.55-.36 1.15-.36 1.78 0 2.48 2.02 4.5 4.5 4.5.63 0 1.23-.13 1.77-.36l.98.98c-.88.24-1.8.38-2.75.38-3.790 0-7.17-2.13-8.82-5.5.7-1.43 1.72-2.61 2.93-3.53z"/></svg>
<div class="a" style="left:1427px;top:211.5px;width:170.5px;height:24px;border:1px solid #dadada;border-radius:3px"></div>
<div class="t" style="left:1458.60px;top:218px;font-size:12.5px;color:#616161;font-weight:normal;transform:scaleX(1.0165);transform-origin:0 0;">All Components</div>
<svg class="a" style="left:1553px;top:217px;" width="13" height="13" viewBox="0 0 24 24"><path fill="#616161" d="M16.9 8.3L12 13.2 7.1 8.3 5.4 10l6.6 6.6 6.6-6.6z"/></svg>
<svg class="a" style="left:1614px;top:213px;" width="17" height="17" viewBox="0 0 24 24"><path fill="#555" d="M3 17.25V21h3.75L17.81 9.94l-3.75-3.75L3 17.25zM20.71 7.04c.39-.39.39-1.02 0-1.41l-2.34-2.34c-.39-.39-1.02-.39-1.41 0l-1.83 1.83 3.75 3.75 1.83-1.83z"/></svg>
<svg class="a" style="left:1645px;top:213px;" width="18" height="18" viewBox="0 0 24 24"><path fill="#555" d="M16 9v10H8V9h8m-1.5-6h-5l-1 1H5v2h14V4h-3.5l-1-1zM18 7H6v12c0 1.1.9 2 2 2h8c1.1 0 2-.9 2-2V7z"/></svg>
<div class="t" style="left:1686.70px;top:216px;font-size:12.5px;color:#616161;font-weight:normal;transform:scaleX(0.9829);transform-origin:0 0;">Lottie1 Properties</div>
<div class="a" style="left:34px;top:240px;width:1px;height:790px;background:#e0e0e0"></div>
<div class="a" style="left:250px;top:206px;width:1px;height:824px;background:#e0e0e0"></div>
<div class="a" style="left:1422px;top:206px;width:1px;height:824px;background:#e0e0e0"></div>
<div class="a" style="left:1672px;top:206px;width:1px;height:824px;background:#e0e0e0"></div>
<div class="a" style="left:0px;top:244px;width:33px;height:33px;background:#d1c4e9;border-radius:0 17px 17px 0"></div>
<svg class="a" style="left:8.2px;top:251.89999999999998px;" width="17" height="17" viewBox="0 0 24 24"><path fill="#4527a0" d="M3 6h18V4H3c-1.1 0-2 .9-2 2v12c0 1.1.9 2 2 2h4v-2H3V6zm10 6H9v1.78c-.61.55-1 1.33-1 2.22s.39 1.67 1 2.22V20h4v-1.78c.61-.55 1-1.34 1-2.22s-.39-1.67-1-2.22V12zm-2 5.5c-.83 0-1.5-.67-1.5-1.5s.67-1.5 1.5-1.5 1.5.67 1.5 1.5-.67 1.5-1.5 1.5zM22 8h-6c-.5 0-1 .5-1 1v10c0 .5.5 1 1 1h6c.5 0 1-.5 1-1V9c0-.5-.5-1-1-1zm-1 10h-4v-8h4v8z"/></svg>
<svg class="a" style="left:8.2px;top:284.9px;" width="17" height="17" viewBox="0 0 24 24"><path fill="#5a5a5a" d="M19 3H5c-1.1 0-2 .9-2 2v14c0 1.1.9 2 2 2h14c1.1 0 2-.9 2-2V5c0-1.1-.9-2-2-2zm0 2v3H5V5h14zM5 19v-9h4v9H5zm6 0v-9h2v9h-2zm4 0v-9h4v9h-4z"/></svg>
<svg class="a" style="left:8.2px;top:317.9px;" width="17" height="17" viewBox="0 0 24 24"><path fill="#5a5a5a" d="M14.25 2.26l-.08-.04-.01.02C13.46 2.09 12.74 2 12 2 6.48 2 2 6.48 2 12s4.48 10 10 10 10-4.48 10-10c0-4.75-3.31-8.72-7.75-9.74zM19.41 9h-7.99l2.71-4.7c2.4.66 4.35 2.42 5.28 4.7zM13.1 4.08L10.27 9l-1.15 2L6.4 6.3C7.84 4.88 9.82 4 12 4c.37 0 .74.03 1.1.08zM5.7 7.09L8.54 12l1.15 2H4.26C4.1 13.36 4 12.690 4 12c0-1.85.64-3.55 1.7-4.91zM4.59 15h7.98l-2.71 4.7c-2.4-.67-4.34-2.42-5.27-4.7zm6.31 4.91L14.89 13l2.72 4.7C16.16 19.12 14.18 20 12 20c-.38 0-.74-.04-1.1-.09zm7.4-3l-4-6.91h5.43c.17.64.27 1.31.27 2 0 1.85-.64 3.55-1.7 4.91z"/></svg>
<svg class="a" style="left:8.2px;top:350.9px;" width="17" height="17" viewBox="0 0 24 24"><path fill="#5a5a5a" d="M12 22C6.49 22 2 17.51 2 12S6.49 2 12 2s10 4.04 10 9c0 3.31-2.69 6-6 6h-1.77c-.28 0-.5.22-.5.5 0 .12.05.23.13.33.41.47.64 1.06.64 1.67 0 1.38-1.12 2.5-2.5 2.5zm0-18c-4.41 0-8 3.59-8 8s3.59 8 8 8c.28 0 .5-.22.5-.5 0-.16-.08-.28-.14-.35-.41-.46-.63-1.05-.63-1.65 0-1.38 1.12-2.5 2.5-2.5H16c2.21 0 4-1.79 4-4 0-3.86-3.59-7-8-7zM6.5 10.5a1.5 1.5 0 1 1 0 3 1.5 1.5 0 0 1 0-3zm3-4a1.5 1.5 0 1 1 0 3 1.5 1.5 0 0 1 0-3zm5 0a1.5 1.5 0 1 1 0 3 1.5 1.5 0 0 1 0-3zm3 4a1.5 1.5 0 1 1 0 3 1.5 1.5 0 0 1 0-3z"/></svg>
<svg class="a" style="left:8.2px;top:383.9px;" width="17" height="17" viewBox="0 0 24 24"><path fill="#5a5a5a" d="M20.5 3l-.16.03L15 5.1 9 3 3.36 4.9c-.21.07-.36.25-.36.48V20.5c0 .28.22.5.5.5l.16-.03L9 18.9l6 2.1 5.64-1.9c.21-.07.36-.25.36-.48V3.5c0-.28-.22-.5-.5-.5zM10 5.47l4 1.4v11.66l-4-1.4V5.47zm-5 .99l3-1.01v11.7l-3 1.16V6.46zm14 11.08l-3 1.01V6.86l3-1.16v11.84z"/></svg>
<svg class="a" style="left:8.2px;top:416.9px;" width="17" height="17" viewBox="0 0 24 24"><path fill="#5a5a5a" d="M12 2C6.48 2 2 6.48 2 12s4.48 10 10 10 10-4.48 10-10S17.52 2 12 2zm0 18c-4.41 0-8-3.59-8-8s3.59-8 8-8 8 3.59 8 8-3.59 8-8 8zm-5.5-2.5l7.51-3.49L17.5 6.5 9.99 9.99 6.5 17.5zm5.5-6.6c.61 0 1.1.49 1.1 1.1s-.49 1.1-1.1 1.1-1.1-.49-1.1-1.1.49-1.1 1.1-1.1z"/></svg>
<svg class="a" style="left:8.2px;top:449.9px;" width="17" height="17" viewBox="0 0 24 24"><path fill="#5a5a5a" d="M12 2C6.48 2 2 6.48 2 12s4.48 10 10 10 10-4.48 10-10S17.52 2 12 2zm0 18c-4.41 0-8-3.59-8-8s3.59-8 8-8 8 3.59 8 8-3.59 8-8 8zM9 6.6a2.4 2.4 0 1 1 0 4.8 2.4 2.4 0 0 1 0-4.8zm0 1.4a1 1 0 1 0 0 2 1 1 0 0 0 0-2zm6.5 1.3a1.4 1.4 0 1 1 0 2.8 1.4 1.4 0 0 1 0-2.8zM13 14h6.8c-.6 2.8-3 5-5.8 5.9L13 19zM4.6 16.2q2.3-2.4 5.6-2.3v1.6q-2.6 0-4.6 1.9z"/></svg>
<svg class="a" style="left:8.2px;top:482.9px;" width="17" height="17" viewBox="0 0 24 24"><path fill="#5a5a5a" d="M16 1H4c-1.1 0-2 .9-2 2v14h2V3h12V1zm-1 4l6 6v10c0 1.1-.9 2-2 2H7.99C6.89 23 6 22.1 6 21l.01-14c0-1.1.89-2 1.99-2h7zm-1 7h5.5L14 6.5V12zM8 7v14h11v-8h-6V7z"/></svg>
<svg class="a" style="left:8.2px;top:515.9px;" width="17" height="17" viewBox="0 0 24 24"><path fill="#5a5a5a" d="M14 6V4h-4v2h4zM4 8v11h16V8H4zm16-2c1.11 0 2 .89 2 2v11c0 1.11-.89 2-2 2H4c-1.11 0-2-.89-2-2l.01-11c0-1.11.88-2 1.99-2h4V4c0-1.11.89-2 2-2h4c1.11 0 2 .89 2 2v2h4z"/></svg>
<svg class="a" style="left:8.2px;top:548.9px;" width="17" height="17" viewBox="0 0 24 24"><path fill="#5a5a5a" d="M9.4 16.6L4.8 12l4.6-4.6L8 6l-6 6 6 6 1.4-1.4zm5.2 0l4.6-4.6-4.6-4.6L16 6l6 6-6 6-1.4-1.4z"/></svg>
<svg class="a" style="left:8.2px;top:581.9px;" width="17" height="17" viewBox="0 0 24 24"><path fill="#5a5a5a" d="M6.18 15.64a2.18 2.18 0 0 1 2.18 2.18C8.36 19 7.38 20 6.18 20 5 20 4 19 4 17.82a2.18 2.18 0 0 1 2.18-2.18M4 4.44A15.56 15.56 0 0 1 19.56 20h-2.83A12.73 12.73 0 0 0 4 7.27V4.44m0 5.66a9.9 9.9 0 0 1 9.9 9.9h-2.83A7.07 7.07 0 0 0 4 12.93V10.1z"/></svg>
<svg class="a" style="left:8.2px;top:614.9px;" width="17" height="17" viewBox="0 0 24 24"><path fill="#5a5a5a" d="M21.35 11.1h-9.17v2.73h6.51c-.33 3.81-3.5 5.44-6.5 5.44C8.36 19.27 5 16.25 5 12c0-4.1 3.2-7.27 7.2-7.27 3.09 0 4.9 1.97 4.9 1.97L19 4.72S16.56 2 12.1 2C6.42 2 2.03 6.8 2.03 12c0 5.05 4.13 10 10.22 10 5.35 0 9.25-3.67 9.25-9.09 0-1.15-.15-1.81-.15-1.81z"/></svg>
<svg class="a" style="left:8.2px;top:647.9px;" width="17" height="17" viewBox="0 0 24 24"><path fill="#5a5a5a" d="M12 2C6.48 2 2 6.48 2 12s4.48 10 10 10 10-4.48 10-10S17.52 2 12 2zm0 18c-4.41 0-8-3.59-8-8s3.59-8 8-8 8 3.59 8 8-3.59 8-8 8zm.31-8.86c-1.77-.45-2.34-.94-2.34-1.67 0-.84.79-1.43 2.1-1.43 1.38 0 1.9.66 1.94 1.64h1.71c-.05-1.34-.87-2.57-2.49-2.97V5H10.9v1.69c-1.51.32-2.72 1.3-2.72 2.81 0 1.79 1.49 2.69 3.66 3.21 1.95.46 2.34 1.15 2.34 1.87 0 .53-.39 1.39-2.1 1.39-1.6 0-2.23-.72-2.32-1.64H8.04c.1 1.7 1.36 2.66 2.86 2.97V19h2.34v-1.67c1.52-.29 2.72-1.16 2.73-2.77-.01-2.2-1.9-2.96-3.66-3.42z"/></svg>
<svg class="a" style="left:8.2px;top:680.9px;" width="17" height="17" viewBox="0 0 24 24"><path fill="#5a5a5a" d="M16.66 4.52l2.83 2.83-2.83 2.83-2.83-2.83 2.83-2.83M9 5v4H5V5h4m10 10v4h-4v-4h4M9 15v4H5v-4h4m7.66-13.31L11 7.34 16.66 13l5.66-5.66-5.66-5.65zM11 3H3v8h8V3zm10 10h-8v8h8v-8zm-10 0H3v8h8v-8z"/></svg>
<svg class="a" style="left:8.2px;top:713.9px;" width="17" height="17" viewBox="0 0 24 24"><path fill="#5a5a5a" d="M10.5 4.5c.28 0 .5.22.5.5v2h6v6h2c.28 0 .5.22.5.5s-.22.5-.5.5h-2v6h-2.12c-.68-1.75-2.39-3-4.38-3s-3.7 1.25-4.38 3H4v-2.12c1.75-.68 3-2.39 3-4.38 0-1.99-1.24-3.7-2.99-4.38L4 7h6V5c0-.28.22-.5.5-.5m0-2C9.12 2.5 8 3.62 8 5H4c-1.1 0-1.99.9-1.99 2v3.8h.29c1.49 0 2.7 1.21 2.7 2.7s-1.21 2.7-2.7 2.7H2V20c0 1.1.9 2 2 2h3.8v-.3c0-1.49 1.21-2.7 2.7-2.7s2.7 1.21 2.7 2.7v.3H17c1.1 0 2-.9 2-2v-4c1.38 0 2.5-1.12 2.5-2.5S20.38 11 19 11V7c0-1.1-.9-2-2-2h-4c0-1.38-1.12-2.5-2.5-2.5z"/></svg>
<svg class="a" style="left:45px;top:249.5px;" width="20" height="20" viewBox="0 0 20 20"><rect x="3" y="2.5" width="14.5" height="14.5" rx="1.5" fill="none" stroke="#4527a0" stroke-width="1.7"/><rect x="6.4" y="5.9" width="7.7" height="7.7" fill="#4527a0"/></svg>
<div class="t" style="left:75.80px;top:252px;font-size:13px;color:#4527a0;font-weight:normal;transform:scaleX(0.9153);transform-origin:0 0;">Button</div>
<svg class="a" style="left:211.5px;top:250.0px;" width="16" height="16" viewBox="0 0 24 24"><path fill="#757575" d="M11 7h2v2h-2zm0 4h2v6h-2zm1-9C6.48 2 2 6.48 2 12s4.48 10 10 10 10-4.48 10-10S17.52 2 12 2zm0 18c-4.41 0-8-3.59-8-8s3.59-8 8-8 8 3.59 8 8-3.59 8-8 8z"/></svg>
<svg class="a" style="left:45px;top:288.5px;" width="20" height="20" viewBox="0 0 24 24"><path fill="#4527a0" d="M19 3H5c-1.11 0-2 .9-2 2v14c0 1.1.89 2 2 2h14c1.11 0 2-.9 2-2V5c0-1.1-.89-2-2-2zm-9 14l-5-5 1.41-1.41L10 14.17l7.59-7.59L19 8l-9 9z"/></svg>
<div class="t" style="left:75.80px;top:291px;font-size:13px;color:#4527a0;font-weight:normal;transform:scaleX(0.9618);transform-origin:0 0;">Checkbox</div>
<svg class="a" style="left:211.5px;top:289.0px;" width="16" height="16" viewBox="0 0 24 24"><path fill="#757575" d="M11 7h2v2h-2zm0 4h2v6h-2zm1-9C6.48 2 2 6.48 2 12s4.48 10 10 10 10-4.48 10-10S17.52 2 12 2zm0 18c-4.41 0-8-3.59-8-8s3.59-8 8-8 8 3.59 8 8-3.59 8-8 8z"/></svg>
<svg class="a" style="left:45px;top:327.5px;" width="20" height="20" viewBox="0 0 20 20"><path d="M13.2 5.9A6 6 0 1 0 14.6 13.6" fill="none" stroke="#4527a0" stroke-width="2"/><path d="M11.3 9.3h7.4l-3.7 4.2z" fill="#4527a0"/></svg>
<div class="t" style="left:75.80px;top:330px;font-size:13px;color:#4527a0;font-weight:normal;transform:scaleX(0.9540);transform-origin:0 0;">Circular Progress</div>
<svg class="a" style="left:211.5px;top:328.0px;" width="16" height="16" viewBox="0 0 24 24"><path fill="#757575" d="M11 7h2v2h-2zm0 4h2v6h-2zm1-9C6.48 2 2 6.48 2 12s4.48 10 10 10 10-4.48 10-10S17.52 2 12 2zm0 18c-4.41 0-8-3.59-8-8s3.59-8 8-8 8 3.59 8 8-3.59 8-8 8z"/></svg>
<svg class="a" style="left:45px;top:366.5px;" width="20" height="20" viewBox="0 0 20 20"><rect x="2.3" y="4.5" width="3.4" height="11.6" fill="#4527a0"/><rect x="8.2" y="2.4" width="3.6" height="16.3" fill="#4527a0"/><rect x="14.1" y="7.5" width="3.5" height="6" fill="#4527a0"/></svg>
<div class="t" style="left:75.80px;top:369px;font-size:13px;color:#4527a0;font-weight:normal;transform:scaleX(0.9360);transform-origin:0 0;">Custom Progress</div>
<svg class="a" style="left:211.5px;top:367.0px;" width="16" height="16" viewBox="0 0 24 24"><path fill="#757575" d="M11 7h2v2h-2zm0 4h2v6h-2zm1-9C6.48 2 2 6.48 2 12s4.48 10 10 10 10-4.48 10-10S17.52 2 12 2zm0 18c-4.41 0-8-3.59-8-8s3.59-8 8-8 8 3.59 8 8-3.59 8-8 8z"/></svg>
<svg class="a" style="left:45px;top:405.5px;" width="20" height="20" viewBox="0 0 20 20"><rect x="5.2" y="2.6" width="13" height="12.6" rx="1" fill="none" stroke="#4527a0" stroke-width="2"/><rect x="4.2" y="1.6" width="15" height="4" fill="#4527a0"/><rect x="7" y="0" width="1.8" height="3" fill="#4527a0"/><rect x="14.5" y="0" width="1.8" height="3" fill="#4527a0"/><rect x="12.2" y="9" width="3" height="3" fill="#4527a0"/><path d="M1.9 8v10.7h11.5" fill="none" stroke="#4527a0" stroke-width="1.6"/></svg>
<div class="t" style="left:75.80px;top:408px;font-size:13px;color:#4527a0;font-weight:normal;transform:scaleX(0.9361);transform-origin:0 0;">Date Picker</div>
<svg class="a" style="left:211.5px;top:406.0px;" width="16" height="16" viewBox="0 0 24 24"><path fill="#757575" d="M11 7h2v2h-2zm0 4h2v6h-2zm1-9C6.48 2 2 6.48 2 12s4.48 10 10 10 10-4.48 10-10S17.52 2 12 2zm0 18c-4.41 0-8-3.59-8-8s3.59-8 8-8 8 3.59 8 8-3.59 8-8 8z"/></svg>
<svg class="a" style="left:45px;top:444.5px;" width="20" height="20" viewBox="0 0 24 24"><path fill="#4527a0" d="M12 2C6.48 2 2 6.48 2 12s4.48 10 10 10 10-4.48 10-10S17.52 2 12 2zm5 11h-4v4h-2v-4H7v-2h4V7h2v4h4v2z"/></svg>
<div class="t" style="left:75.80px;top:447px;font-size:13px;color:#4527a0;font-weight:normal;transform:scaleX(0.9717);transform-origin:0 0;">Floating Action Button</div>
<svg class="a" style="left:211.5px;top:445.0px;" width="16" height="16" viewBox="0 0 24 24"><path fill="#757575" d="M11 7h2v2h-2zm0 4h2v6h-2zm1-9C6.48 2 2 6.48 2 12s4.48 10 10 10 10-4.48 10-10S17.52 2 12 2zm0 18c-4.41 0-8-3.59-8-8s3.59-8 8-8 8 3.59 8 8-3.59 8-8 8z"/></svg>
<svg class="a" style="left:45px;top:483.5px;" width="20" height="20" viewBox="0 0 24 24"><path fill="#4527a0" d="M21 19V5c0-1.1-.9-2-2-2H5c-1.1 0-2 .9-2 2v14c0 1.1.9 2 2 2h14c1.1 0 2-.9 2-2zM8.5 13.5l2.5 3.01L14.5 12l4.5 6H5l3.5-4.5z"/></svg>
<div class="t" style="left:75.80px;top:486px;font-size:13px;color:#4527a0;font-weight:normal;transform:scaleX(0.9299);transform-origin:0 0;">Image</div>
<svg class="a" style="left:211.5px;top:484.0px;" width="16" height="16" viewBox="0 0 24 24"><path fill="#757575" d="M11 7h2v2h-2zm0 4h2v6h-2zm1-9C6.48 2 2 6.48 2 12s4.48 10 10 10 10-4.48 10-10S17.52 2 12 2zm0 18c-4.41 0-8-3.59-8-8s3.59-8 8-8 8 3.59 8 8-3.59 8-8 8z"/></svg>
<svg class="a" style="left:45px;top:522.5px;" width="20" height="20" viewBox="0 0 24 24"><path fill="#4527a0" d="M17.63 5.84C17.27 5.33 16.67 5 16 5L5 5.01C3.9 5.01 3 5.9 3 7v10c0 1.1.9 1.99 2 1.99L16 19c.67 0 1.27-.33 1.63-.84L22 12l-4.37-6.16z"/></svg>
<div class="t" style="left:75.80px;top:525px;font-size:13px;color:#4527a0;font-weight:normal;transform:scaleX(0.9211);transform-origin:0 0;">Label</div>
<svg class="a" style="left:211.5px;top:523.0px;" width="16" height="16" viewBox="0 0 24 24"><path fill="#757575" d="M11 7h2v2h-2zm0 4h2v6h-2zm1-9C6.48 2 2 6.48 2 12s4.48 10 10 10 10-4.48 10-10S17.52 2 12 2zm0 18c-4.41 0-8-3.59-8-8s3.59-8 8-8 8 3.59 8 8-3.59 8-8 8z"/></svg>
<svg class="a" style="left:45px;top:561.5px;" width="20" height="20" viewBox="0 0 24 24"><path fill="#4527a0" d="M4 18l8.5-6L4 6v12zm9-12v12l8.5-6L13 6z"/></svg>
<div class="t" style="left:75.80px;top:564px;font-size:13px;color:#4527a0;font-weight:normal;transform:scaleX(0.9470);transform-origin:0 0;">Linear Progressbar</div>
<svg class="a" style="left:211.5px;top:562.0px;" width="16" height="16" viewBox="0 0 24 24"><path fill="#757575" d="M11 7h2v2h-2zm0 4h2v6h-2zm1-9C6.48 2 2 6.48 2 12s4.48 10 10 10 10-4.48 10-10S17.52 2 12 2zm0 18c-4.41 0-8-3.59-8-8s3.59-8 8-8 8 3.59 8 8-3.59 8-8 8z"/></svg>
<svg class="a" style="left:45px;top:600.5px;" width="20" height="20" viewBox="0 0 20 20"><rect x="2.9" y="5.8" width="3.4" height="3.4" fill="none" stroke="#4527a0" stroke-width="1.6"/><rect x="9.1" y="6.7" width="8.4" height="1.9" fill="#4527a0"/><path d="M1.6 14.4l2.4 2.4 4-4.2" fill="none" stroke="#4527a0" stroke-width="1.8"/><rect x="9.1" y="13" width="8.4" height="1.9" fill="#4527a0"/></svg>
<div class="t" style="left:75.80px;top:603px;font-size:13px;color:#4527a0;font-weight:normal;transform:scaleX(0.9323);transform-origin:0 0;">List Picker</div>
<svg class="a" style="left:211.5px;top:601.0px;" width="16" height="16" viewBox="0 0 24 24"><path fill="#757575" d="M11 7h2v2h-2zm0 4h2v6h-2zm1-9C6.48 2 2 6.48 2 12s4.48 10 10 10 10-4.48 10-10S17.52 2 12 2zm0 18c-4.41 0-8-3.59-8-8s3.59-8 8-8 8 3.59 8 8-3.59 8-8 8z"/></svg>
<svg class="a" style="left:45px;top:639.5px;" width="20" height="20" viewBox="0 0 24 24"><path fill="#4527a0" d="M12 22c1.1 0 2-.9 2-2h-4c0 1.1.89 2 2 2zm6-6v-5c0-3.07-1.64-5.64-4.5-6.32V4c0-.83-.67-1.5-1.5-1.5s-1.5.67-1.5 1.5v.68C7.63 5.36 6 7.92 6 11v5l-2 2v1h16v-1l-2-2z"/></svg>
<div class="t" style="left:75.80px;top:642px;font-size:13px;color:#4527a0;font-weight:normal;transform:scaleX(1.0248);transform-origin:0 0;">Notifier</div>
<svg class="a" style="left:211.5px;top:640.0px;" width="16" height="16" viewBox="0 0 24 24"><path fill="#757575" d="M11 7h2v2h-2zm0 4h2v6h-2zm1-9C6.48 2 2 6.48 2 12s4.48 10 10 10 10-4.48 10-10S17.52 2 12 2zm0 18c-4.41 0-8-3.59-8-8s3.59-8 8-8 8 3.59 8 8-3.59 8-8 8z"/></svg>
<svg class="a" style="left:45px;top:678.5px;" width="20" height="20" viewBox="0 0 24 24"><path fill="#4527a0" d="M12 7c-2.76 0-5 2.24-5 5s2.24 5 5 5 5-2.24 5-5-2.24-5-5-5zm0-5C6.48 2 2 6.48 2 12s4.48 10 10 10 10-4.48 10-10S17.52 2 12 2zm0 18c-4.42 0-8-3.58-8-8s3.58-8 8-8 8 3.58 8 8-3.58 8-8 8z"/></svg>
<div class="t" style="left:75.80px;top:681px;font-size:13px;color:#4527a0;font-weight:normal;transform:scaleX(0.9406);transform-origin:0 0;">Radio Button</div>
<svg class="a" style="left:211.5px;top:679.0px;" width="16" height="16" viewBox="0 0 24 24"><path fill="#757575" d="M11 7h2v2h-2zm0 4h2v6h-2zm1-9C6.48 2 2 6.48 2 12s4.48 10 10 10 10-4.48 10-10S17.52 2 12 2zm0 18c-4.41 0-8-3.59-8-8s3.59-8 8-8 8 3.59 8 8-3.59 8-8 8z"/></svg>
<svg class="a" style="left:45px;top:717.5px;" width="20" height="20" viewBox="0 0 24 24"><path fill="#4527a0" d="M22 9.24l-7.19-.62L12 2 9.19 8.63 2 9.24l5.46 4.73L5.82 21 12 17.27 18.18 21l-1.63-7.03L22 9.24zM12 15.4V6.1l1.71 4.04 4.38.38-3.32 2.88 1 4.28L12 15.4z"/></svg>
<div class="t" style="left:75.80px;top:720px;font-size:13px;color:#4527a0;font-weight:normal;transform:scaleX(0.9280);transform-origin:0 0;">Rating Bar</div>
<svg class="a" style="left:211.5px;top:718.0px;" width="16" height="16" viewBox="0 0 24 24"><path fill="#757575" d="M11 7h2v2h-2zm0 4h2v6h-2zm1-9C6.48 2 2 6.48 2 12s4.48 10 10 10 10-4.48 10-10S17.52 2 12 2zm0 18c-4.41 0-8-3.59-8-8s3.59-8 8-8 8 3.59 8 8-3.59 8-8 8z"/></svg>
<svg class="a" style="left:45px;top:756.5px;" width="20" height="20" viewBox="0 0 24 24"><path fill="#4527a0" d="M3 17v2h6v-2H3zM3 5v2h10V5H3zm10 16v-2h8v-2h-8v-2h-2v6h2zM7 9v2H3v2h4v2h2V9H7zm14 4v-2H11v2h10zm-6-4h2V7h4V5h-4V3h-2v6z"/></svg>
<div class="t" style="left:75.80px;top:759px;font-size:13px;color:#4527a0;font-weight:normal;transform:scaleX(0.9658);transform-origin:0 0;">Slider</div>
<svg class="a" style="left:211.5px;top:757.0px;" width="16" height="16" viewBox="0 0 24 24"><path fill="#757575" d="M11 7h2v2h-2zm0 4h2v6h-2zm1-9C6.48 2 2 6.48 2 12s4.48 10 10 10 10-4.48 10-10S17.52 2 12 2zm0 18c-4.41 0-8-3.59-8-8s3.59-8 8-8 8 3.59 8 8-3.59 8-8 8z"/></svg>
<svg class="a" style="left:45px;top:795.5px;" width="20" height="20" viewBox="0 0 24 24"><path fill="#4527a0" d="M3 4h18v2H3zm0 5h18v2H3zm0 5h18v2H3zm0 4h18v2H3z"/></svg>
<div class="t" style="left:75.80px;top:798px;font-size:13px;color:#4527a0;font-weight:normal;transform:scaleX(0.9286);transform-origin:0 0;">Snackbar</div>
<svg class="a" style="left:211.5px;top:796.0px;" width="16" height="16" viewBox="0 0 24 24"><path fill="#757575" d="M11 7h2v2h-2zm0 4h2v6h-2zm1-9C6.48 2 2 6.48 2 12s4.48 10 10 10 10-4.48 10-10S17.52 2 12 2zm0 18c-4.41 0-8-3.59-8-8s3.59-8 8-8 8 3.59 8 8-3.59 8-8 8z"/></svg>
<svg class="a" style="left:45px;top:834.5px;" width="20" height="20" viewBox="0 0 24 24"><path fill="#4527a0" d="M12 2C6.48 2 2 6.48 2 12s4.48 10 10 10 10-4.48 10-10S17.52 2 12 2zm0 12.5l-4-4h8z"/></svg>
<div class="t" style="left:75.80px;top:837px;font-size:13px;color:#4527a0;font-weight:normal;transform:scaleX(0.9641);transform-origin:0 0;">Spinner</div>
<svg class="a" style="left:211.5px;top:835.0px;" width="16" height="16" viewBox="0 0 24 24"><path fill="#757575" d="M11 7h2v2h-2zm0 4h2v6h-2zm1-9C6.48 2 2 6.48 2 12s4.48 10 10 10 10-4.48 10-10S17.52 2 12 2zm0 18c-4.41 0-8-3.59-8-8s3.59-8 8-8 8 3.59 8 8-3.59 8-8 8z"/></svg>
<svg class="a" style="left:45px;top:873.5px;" width="20" height="20" viewBox="0 0 24 24"><path fill="#4527a0" d="M6 14l3 3v5h6v-5l3-3V9H6zm5-12h2v3h-2zM3.5 5.875L4.914 4.46l2.12 2.122L5.62 7.997zm13.46.71l2.123-2.12 1.414 1.414L18.375 8z"/></svg>
<div class="t" style="left:75.80px;top:876px;font-size:13px;color:#4527a0;font-weight:normal;transform:scaleX(0.9745);transform-origin:0 0;">Spotlight</div>
<svg class="a" style="left:211.5px;top:874.0px;" width="16" height="16" viewBox="0 0 24 24"><path fill="#757575" d="M11 7h2v2h-2zm0 4h2v6h-2zm1-9C6.48 2 2 6.48 2 12s4.48 10 10 10 10-4.48 10-10S17.52 2 12 2zm0 18c-4.41 0-8-3.59-8-8s3.59-8 8-8 8 3.59 8 8-3.59 8-8 8z"/></svg>
<svg class="a" style="left:45px;top:912.5px;" width="20" height="20" viewBox="0 0 24 24"><path fill="#4527a0" d="M18 7l-1.41-1.41-6.34 6.34 1.41 1.41L18 7zm4.24-1.41L11.66 16.17 7.48 12l-1.41 1.41L11.66 19l12-12-1.42-1.41zM.41 13.41L6 19l1.41-1.41L1.83 12 .41 13.41z"/></svg>
<div class="t" style="left:75.80px;top:915px;font-size:13px;color:#4527a0;font-weight:normal;transform:scaleX(0.9187);transform-origin:0 0;">State Progress Bar</div>
<svg class="a" style="left:211.5px;top:913.0px;" width="16" height="16" viewBox="0 0 24 24"><path fill="#757575" d="M11 7h2v2h-2zm0 4h2v6h-2zm1-9C6.48 2 2 6.48 2 12s4.48 10 10 10 10-4.48 10-10S17.52 2 12 2zm0 18c-4.41 0-8-3.59-8-8s3.59-8 8-8 8 3.59 8 8-3.59 8-8 8z"/></svg>
<svg class="a" style="left:45px;top:951.5px;" width="20" height="20" viewBox="0 0 20 20"><rect x="1.6" y="10.8" width="6.6" height="2.6" rx=".6" fill="#4527a0"/><circle cx="14" cy="11.7" r="4.3" fill="#4527a0"/></svg>
<div class="t" style="left:75.80px;top:954px;font-size:13px;color:#4527a0;font-weight:normal;transform:scaleX(0.9271);transform-origin:0 0;">Switch</div>
<svg class="a" style="left:211.5px;top:952.0px;" width="16" height="16" viewBox="0 0 24 24"><path fill="#757575" d="M11 7h2v2h-2zm0 4h2v6h-2zm1-9C6.48 2 2 6.48 2 12s4.48 10 10 10 10-4.48 10-10S17.52 2 12 2zm0 18c-4.41 0-8-3.59-8-8s3.59-8 8-8 8 3.59 8 8-3.59 8-8 8z"/></svg>
<svg class="a" style="left:45px;top:990.5px;" width="20" height="20" viewBox="0 0 20 20"><path d="M10 7.3H2.4v6.6H10M14 7.3h3v6.6h-3M12 2.5v16.5M9.4 2.6h5.2M9.4 18.9h5.2" fill="none" stroke="#4527a0" stroke-width="1.7"/></svg>
<div class="t" style="left:75.80px;top:993px;font-size:13px;color:#4527a0;font-weight:normal;transform:scaleX(0.8785);transform-origin:0 0;">Text Box</div>
<svg class="a" style="left:211.5px;top:991.0px;" width="16" height="16" viewBox="0 0 24 24"><path fill="#757575" d="M11 7h2v2h-2zm0 4h2v6h-2zm1-9C6.48 2 2 6.48 2 12s4.48 10 10 10 10-4.48 10-10S17.52 2 12 2zm0 18c-4.41 0-8-3.59-8-8s3.59-8 8-8 8 3.59 8 8-3.59 8-8 8z"/></svg>
<div class="a" style="left:243px;top:241px;width:6px;height:751px;background:#a8a8a8;border-radius:3px"></div>
<div class="a" style="left:250.6px;top:637px;width:26.6px;height:26px;background:#f5f5f5;border-radius:0 13px 13px 0"></div>
<svg class="a" style="left:259.5px;top:644.5px;" width="8" height="11" viewBox="0 0 8 11"><path d="M6.8.8L1.5 5.5l5.3 4.7" fill="none" stroke="#bdbdbd" stroke-width="1.5"/></svg>
<div class="a" style="left:1394.8px;top:637px;width:27.2px;height:26px;background:#f5f5f5;border-radius:13px 0 0 13px"></div>
<svg class="a" style="left:1405px;top:644.5px;" width="8" height="11" viewBox="0 0 8 11"><path d="M1.2.8l5.3 4.7-5.3 4.7" fill="none" stroke="#bdbdbd" stroke-width="1.5"/></svg>
<div class="a" style="left:1644.8px;top:605.8px;width:27.2px;height:26px;background:#f5f5f5;border-radius:13px 0 0 13px"></div>
<svg class="a" style="left:1655px;top:613.3px;" width="8" height="11" viewBox="0 0 8 11"><path d="M1.2.8l5.3 4.7-5.3 4.7" fill="none" stroke="#bdbdbd" stroke-width="1.5"/></svg>
<div class="a" style="left:1424px;top:1019px;width:230px;height:6px;background:#a8a8a8;border-radius:3px"></div>
<svg class="a" style="left:706px;top:257.5px;" width="270" height="578" viewBox="0 0 270 578">
<rect x="0.3" y="0.3" width="269.4" height="577.4" rx="31.5" fill="#e6d8d3"/>
<rect x="3" y="3" width="264" height="572" rx="29" fill="#2c2c2c"/>
<rect x="5.2" y="5.2" width="259.6" height="567.6" rx="27" fill="none" stroke="#707070" stroke-width="0.9"/>
<rect x="6" y="6" width="258" height="566" rx="26" fill="#1c1c1c"/>
<rect x="8.6" y="8.6" width="252.8" height="560.8" rx="24" fill="none" stroke="#5a5a5a" stroke-width="0.8"/>
<rect x="9.4" y="9.4" width="251.2" height="559.2" rx="23" fill="#000"/>
</svg>
<div class="a" style="left:810px;top:275px;width:63px;height:8px;background:#262626;border-radius:4px"></div>
<div class="a" style="left:810px;top:811px;width:63px;height:8px;background:#262626;border-radius:4px"></div>
<div class="a" style="left:719px;top:305px;width:247px;height:17px;background:#be8e0a;border-radius:8px 8px 0 0"></div>
<div class="a" style="left:719px;top:322px;width:247px;height:444px;background:#fff"></div>
<div class="a" style="left:719px;top:326px;width:245px;height:434px;background:#00cfc0;border:1px dashed #4527a0"></div>
<div class="a" style="left:719px;top:766px;width:247px;height:29px;background:#000;border:1px solid #1c1c1c;border-top:none;border-radius:0 0 8px 8px"></div>
<svg class="a" style="left:781.5px;top:776.5px;" width="6" height="8" viewBox="0 0 6 8"><path d="M4.8.8L1.5 4l3.3 3.2" fill="none" stroke="#ddd" stroke-width="1.4"/></svg>
<div class="a" style="left:834px;top:777px;width:14px;height:6px;background:#fff;border-radius:3px"></div>
<svg class="a" style="left:909px;top:309px;" width="11" height="9" viewBox="0 0 11 9"><path d="M5.5 8.5L0 2.2Q5.5-2.2 11 2.2z" fill="#fff"/></svg>
<div class="a" style="left:926px;top:309px;width:4px;height:8px;background:#fff;border-radius:.5px"></div>
<div class="t" style="left:935.50px;top:311px;font-size:7.5px;color:#fff;font-weight:normal;">12:00</div>
<div class="a" style="left:976px;top:384px;width:3px;height:40px;background:#efa070;border-radius:0 1px 1px 0"></div>
<div class="a" style="left:976px;top:461.5px;width:2.5px;height:80px;background:#d6ccc8"></div>
<svg class="a" style="left:775px;top:385px;" width="130" height="65" viewBox="0 0 1920 960"><g fill="none" stroke-linecap="round" stroke-width="56">
<path d="M290 760 Q180 790 160 690 Q170 580 280 590 Q340 600 420 680 Q560 830 820 830" stroke="#0a7f8a"/>
<path d="M435 180 L405 560 Q390 680 290 760" stroke="#ffffff" stroke-linecap="butt"/>
<path d="M790 620 Q700 700 600 630 Q510 540 580 420" stroke="#0a7f8a"/>
<path d="M580 420 Q640 360 740 390 Q860 440 810 610" stroke="#ffffff" stroke-linecap="butt"/>
<path d="M630 480 Q560 400 620 290 Q700 200 850 270 L1080 385" stroke="#ffffff"/>
<path d="M1000 360 L960 690" stroke="#ffffff"/>
<path d="M990 195 L1400 195 M1200 230 L1185 600 M1090 385 L1190 400" stroke="#0a7f8a"/>
<path d="M1360 480 L1350 770" stroke="#ffffff"/>
<path d="M1530 195 L1610 195 M1360 350 L1600 350 M1680 500 L1710 500" stroke="#ffffff"/>
<path d="M1630 195 L1710 195 M1630 350 L1710 350 M1530 500 L1650 500" stroke="#0a7f8a"/>
</g></svg>
<svg class="a" style="left:1430.5px;top:252.5px;" width="14" height="14" viewBox="0 0 24 24"><path fill="#bdbdbd" d="M7 11v2h10v-2H7zm5-9C6.48 2 2 6.48 2 12s4.48 10 10 10 10-4.48 10-10S17.52 2 12 2zm0 18c-4.41 0-8-3.59-8-8s3.59-8 8-8 8 3.59 8 8-3.59 8-8 8z"/></svg>
<div class="a" style="left:1448.5px;top:244.5px;width:174px;height:32px;border:1px solid #e0e0e0;border-radius:4px"></div>
<svg class="a" style="left:1461px;top:251px;" width="15" height="15" viewBox="0 0 24 24"><path fill="#4527a0" d="M16 1H8C6.34 1 5 2.34 5 4v16c0 1.66 1.34 3 3 3h8c1.66 0 3-1.34 3-3V4c0-1.66-1.34-3-3-3zm1 16H7V4h10v13zm-2.5 3.5h-5v-1.5h5z"/></svg>
<div class="t" style="left:1485.50px;top:253px;font-size:13px;color:#4527a0;font-weight:normal;transform:scaleX(0.8591);transform-origin:0 0;">Screen1</div>
<div class="a" style="left:1462px;top:281.3px;width:175px;height:33px;background:#d1c4e9;border:1px solid #4527a0;border-radius:4px"></div>
<div class="t" style="left:1499.60px;top:289px;font-size:13px;color:#4527a0;font-weight:normal;transform:scaleX(0.8531);transform-origin:0 0;">Lottie1</div>
<div class="a" style="left:1462px;top:319.3px;width:175px;height:33px;border:1px solid #e0e0e0;border-radius:4px"></div>
<div class="t" style="left:1499.60px;top:327px;font-size:13px;color:#4527a0;font-weight:normal;transform:scaleX(0.8650);transform-origin:0 0;">HackProtect1</div>
<div class="a" style="left:1462px;top:357.3px;width:175px;height:33px;border:1px solid #e0e0e0;border-radius:4px"></div>
<div class="t" style="left:1499.60px;top:365px;font-size:13px;color:#4527a0;font-weight:normal;transform:scaleX(0.8883);transform-origin:0 0;">Clock1</div>
<div class="a" style="left:1462px;top:395.6px;width:175px;height:33px;border:1px solid #e0e0e0;border-radius:4px"></div>
<div class="t" style="left:1499.60px;top:404px;font-size:13px;color:#4527a0;font-weight:normal;transform:scaleX(0.9399);transform-origin:0 0;">Notifier1</div>
<svg class="a" style="left:1476.5px;top:290px;" width="12" height="14" viewBox="0 0 12 14"><path d="M0 0h8l4 4v10H0z" fill="#00cfc0"/><path d="M4 10q2 0 2.5-4M6.5 6L8.5 8" stroke="#0a6b72" stroke-width=".8" fill="none"/></svg>
<svg class="a" style="left:1476.5px;top:327px;" width="12" height="16" viewBox="0 0 12 16"><rect x="0" y="0" width="12" height="16" fill="#efe8e0"/><rect x=".5" y=".5" width="11" height="15" fill="none" stroke="#a08070" stroke-width="1"/><circle cx="6" cy="7" r="3.2" fill="none" stroke="#8a6a5a" stroke-width="1"/><path d="M2 13h8" stroke="#8a6a5a" stroke-width="1"/></svg>
<svg class="a" style="left:1474.5px;top:364.5px;" width="16" height="16" viewBox="0 0 24 24"><path fill="#5e35b1" d="M15 1H9v2h6V1zm-4 13h2V8h-2v6zm8.03-6.61l1.42-1.42c-.43-.51-.9-.99-1.41-1.41l-1.42 1.42C16.07 4.74 14.12 4 12 4c-4.97 0-9 4.03-9 9s4.02 9 9 9 9-4.03 9-9c0-2.12-.74-4.07-1.970-5.61zM12 20c-3.87 0-7-3.13-7-7s3.13-7 7-7 7 3.13 7 7-3.13 7-7 7z"/></svg>
<svg class="a" style="left:1475px;top:402.5px;" width="15" height="15" viewBox="0 0 24 24"><path fill="#4527a0" d="M12 22c1.1 0 2-.9 2-2h-4c0 1.1.89 2 2 2zm6-6v-5c0-3.07-1.64-5.64-4.5-6.32V4c0-.83-.67-1.5-1.5-1.5s-1.5.67-1.5 1.5v.68C7.63 5.36 6 7.92 6 11v5l-2 2v1h16v-1l-2-2z"/></svg>
<div class="t" style="left:1690.00px;top:252px;font-size:11.5px;color:#4527a0;font-weight:normal;transform:scaleX(0.9754);transform-origin:0 0;">Common properties</div>
<div class="a" style="left:1673px;top:273px;width:247px;height:1px;background:#e0e0e0"></div>
<div class="a" style="left:1686.3px;top:284.3px;width:218.5px;height:34.5px;border:1px solid #616161;border-radius:5px"></div>
<div class="a" style="left:1696.6px;top:282.3px;width:78.8px;height:4px;background:#fff"></div>
<div class="t" style="left:1699.60px;top:278px;font-size:10px;color:#333;font-weight:normal;transform:scaleX(0.9558);transform-origin:0 0;">Animation Speed</div>
<div class="t" style="left:1692.00px;top:296px;font-size:10.5px;color:#333;font-weight:normal;">1</div>
<div class="a" style="left:1687px;top:334.3px;width:13.5px;height:12.5px;border:1px solid #616161;border-radius:2px"></div>
<div class="t" style="left:1715.70px;top:335px;font-size:12px;color:#333;font-weight:normal;transform:scaleX(0.9304);transform-origin:0 0;">Clickable</div>
<div class="a" style="left:1686.3px;top:366.7px;width:219.0px;height:34.0px;border:1px solid #616161;border-radius:5px"></div>
<div class="a" style="left:1696.6px;top:364.7px;width:33.8px;height:4px;background:#fff"></div>
<div class="t" style="left:1699.60px;top:361px;font-size:10px;color:#333;font-weight:normal;transform:scaleX(0.9617);transform-origin:0 0;">Height</div>
<div class="a" style="left:1837.5px;top:366.7px;width:1px;height:34px;background:#616161"></div>
<div class="a" style="left:1871px;top:367.2px;width:33.5px;height:33px;background:#4527a0;border-radius:0 4px 4px 0"></div>
<div class="t" style="left:1691.30px;top:378px;font-size:11.5px;color:#333;font-weight:normal;transform:scaleX(0.9645);transform-origin:0 0;">Fill parent</div>
<svg class="a" style="left:1845px;top:375.2px;" width="17" height="17" viewBox="0 0 24 24"><path fill="#333" d="M5 15H3v4c0 1.1.9 2 2 2h4v-2H5v-4zM5 5h4V3H5c-1.1 0-2 .9-2 2v4h2V5zm14-2h-4v2h4v4h2V5c0-1.1-.9-2-2-2zm0 16h-4v2h4c1.1 0 2-.9 2-2v-4h-2v4zM12 8c-2.21 0-4 1.79-4 4s1.79 4 4 4 4-1.790 4-4-1.79-4-4-4zm0 6c-1.1 0-2-.9-2-2s.9-2 2-2 2 .9 2 2-.9 2-2 2z"/></svg>
<svg class="a" style="left:1876.5px;top:372.2px;" width="23" height="23" viewBox="0 0 24 24"><path fill="#fff" d="M7 14H5v5h5v-2H7v-3zm-2-4h2V7h3V5H5v5zm12 7h-3v2h5v-5h-2v3zM14 5v2h3v3h2V5h-5z"/></svg>
<div class="a" style="left:1686.3px;top:421.7px;width:219.0px;height:34.0px;border:1px solid #616161;border-radius:5px"></div>
<div class="a" style="left:1696.6px;top:419.7px;width:31px;height:4px;background:#fff"></div>
<div class="t" style="left:1699.60px;top:416px;font-size:10px;color:#333;font-weight:normal;transform:scaleX(0.9780);transform-origin:0 0;">Width</div>
<div class="a" style="left:1837.5px;top:421.7px;width:1px;height:34px;background:#616161"></div>
<div class="a" style="left:1871px;top:422.2px;width:33.5px;height:33px;background:#4527a0;border-radius:0 4px 4px 0"></div>
<div class="t" style="left:1691.30px;top:433px;font-size:11.5px;color:#333;font-weight:normal;transform:scaleX(0.9645);transform-origin:0 0;">Fill parent</div>
<svg class="a" style="left:1845px;top:430.2px;" width="17" height="17" viewBox="0 0 24 24"><path fill="#333" d="M5 15H3v4c0 1.1.9 2 2 2h4v-2H5v-4zM5 5h4V3H5c-1.1 0-2 .9-2 2v4h2V5zm14-2h-4v2h4v4h2V5c0-1.1-.9-2-2-2zm0 16h-4v2h4c1.1 0 2-.9 2-2v-4h-2v4zM12 8c-2.21 0-4 1.79-4 4s1.79 4 4 4 4-1.790 4-4-1.79-4-4-4zm0 6c-1.1 0-2-.9-2-2s.9-2 2-2 2 .9 2 2-.9 2-2 2z"/></svg>
<svg class="a" style="left:1876.5px;top:427.2px;" width="23" height="23" viewBox="0 0 24 24"><path fill="#fff" d="M7 14H5v5h5v-2H7v-3zm-2-4h2V7h3V5H5v5zm12 7h-3v2h5v-5h-2v3zM14 5v2h3v3h2V5h-5z"/></svg>
<div class="a" style="left:1687px;top:471.3px;width:13.5px;height:13px;border:1px solid #4527a0;border-radius:2px;background:#fff"></div>
<div class="a" style="left:1689px;top:473.3px;width:9.5px;height:9px;background:#4527a0"></div>
<svg class="a" style="left:1689px;top:473.3px;" width="10" height="9" viewBox="0 0 10 9"><path d="M1.6 5l2.4 2.4 4.8-5" fill="none" stroke="#fff" stroke-width="1.3"/></svg>
<div class="t" style="left:1715.70px;top:472px;font-size:12px;color:#333;font-weight:normal;transform:scaleX(0.9343);transform-origin:0 0;">Loop Animation</div>
<div class="a" style="left:1688.5px;top:503.7px;width:215.20000000000005px;height:31.80000000000001px;border:1px solid #616161;border-radius:5px"></div>
<div class="a" style="left:1698.5px;top:501.7px;width:34.7px;height:4px;background:#fff"></div>
<div class="t" style="left:1701.50px;top:498px;font-size:10px;color:#333;font-weight:normal;transform:scaleX(0.9058);transform-origin:0 0;">Source</div>
<div class="a" style="left:1839px;top:503.7px;width:1px;height:33.5px;background:#616161"></div>
<div class="t" style="left:1697.00px;top:515px;font-size:11px;color:#444;font-weight:normal;transform:scaleX(0.9936);transform-origin:0 0;">snl66-al68n.json</div>
<svg class="a" style="left:1817px;top:513px;" width="14" height="14" viewBox="0 0 24 24"><path fill="#444" d="M16.9 8.3L12 13.2 7.1 8.3 5.4 10l6.6 6.6 6.6-6.6z"/></svg>
<svg class="a" style="left:1845px;top:509.5px;" width="20" height="20" viewBox="0 0 24 24"><path fill="#333" d="M19.35 10.04C18.67 6.59 15.64 4 12 4 9.11 4 6.6 5.64 5.35 8.04 2.34 8.36 0 10.91 0 14c0 3.31 2.69 6 6 6h13c2.76 0 5-2.24 5-5 0-2.64-2.05-4.78-4.65-4.96zM19 18H6c-2.21 0-4-1.79-4-4 0-2.05 1.53-3.76 3.56-3.97l1.07-.11.5-.95C8.08 7.14 9.94 6 12 6c2.62 0 4.88 1.86 5.39 4.43l.3 1.5 1.53.11c1.56.1 2.78 1.41 2.78 2.96 0 1.65-1.35 3-3 3zM8 13h2.55v3h2.9v-3H16l-4-4z"/></svg>
<svg class="a" style="left:1879px;top:508.5px;" width="20" height="20" viewBox="0 0 24 24"><path fill="#333" d="M19 19H5V5h7V3H5c-1.11 0-2 .9-2 2v14c0 1.1.89 2 2 2h14c1.1 0 2-.9 2-2v-7h-2v7zM14 3v2h3.59l-9.83 9.83 1.41 1.41L19 6.41V10h2V3h-7z"/></svg>
<div class="a" style="left:1687px;top:551.5px;width:13.5px;height:13px;border:1px solid #4527a0;border-radius:2px;background:#fff"></div>
<div class="a" style="left:1689px;top:553.5px;width:9.5px;height:9px;background:#4527a0"></div>
<svg class="a" style="left:1689px;top:553.5px;" width="10" height="9" viewBox="0 0 10 9"><path d="M1.6 5l2.4 2.4 4.8-5" fill="none" stroke="#fff" stroke-width="1.3"/></svg>
<div class="t" style="left:1715.70px;top:552px;font-size:12px;color:#333;font-weight:normal;transform:scaleX(0.9649);transform-origin:0 0;">Visible</div>
<div class="a" style="left:0px;top:1030px;width:1920px;height:50px;background:#1e2e3a"></div>
<div class="a" style="left:4px;top:1030px;width:1px;height:50px;background:#3a4a55"></div>
<svg class="a" style="left:31px;top:1045px;" width="20" height="19" viewBox="0 0 20 19"><path d="M0 0h20v14H8l-4 4v-4H0z" fill="#fff"/><path d="M3.5 4h13M3.5 7h13M3.5 10h9" stroke="#1d2d38" stroke-width="1"/></svg>
<div class="a" style="left:21.5px;top:1054.5px;width:18px;height:18px;background:#2f3a42;border:1px solid #9aa;border-radius:50%"></div>
<div class="t" style="left:26.38px;top:1059px;font-size:11px;color:#fff;font-weight:normal;">٤</div>
<div class="t" style="left:56px;top:1036px;width:100px;text-align:center;font-size:14px;color:#fff;direction:rtl">١٢:٤٣ ص</div>
<div class="t" style="left:56px;top:1057px;width:100px;text-align:center;font-size:14px;color:#fff">٢٠٢١/٠٢/١٩</div>
<div class="t" style="left:154.00px;top:1049px;font-size:14px;color:#fff;font-weight:normal;">ENG</div>
<svg class="a" style="left:196px;top:1047px;" width="30" height="16" viewBox="0 0 30 16"><rect x=".7" y=".7" width="28.6" height="14.6" fill="none" stroke="#fff" stroke-width="1.2"/><path d="M4 5h22M4 8h22M8 11.5h14" stroke="#fff" stroke-width="1" stroke-dasharray="1.5 1.5"/></svg>
<svg class="a" style="left:240px;top:1045px;" width="22" height="22" viewBox="0 0 22 22"><path d="M3 19q-3-3 1-6l9-10q3-2 5 0t-1 5l-9 9q-3 3-5 2M14 5l3 3" fill="none" stroke="#fff" stroke-width="1.4"/></svg>
<svg class="a" style="left:275px;top:1046px;" width="22" height="18" viewBox="0 0 22 18"><path d="M1 6h4l6-5v16l-6-5H1z" fill="none" stroke="#fff" stroke-width="1.3"/><path d="M14 6q2 3 0 6M17 4q3 5 0 10M20 2q4 7 0 14" fill="none" stroke="#fff" stroke-width="1.2"/></svg>
<svg class="a" style="left:308px;top:1046px;" width="20" height="18" viewBox="0 0 20 18"><path d="M1 17a16 16 0 0 1 16-16M4.5 17a12.5 12.5 0 0 1 12.5-12.5M8 17a9 9 0 0 1 9-9M11.5 17a5.5 5.5 0 0 1 5.5-5.5" fill="none" stroke="#fff" stroke-width="1.2"/><circle cx="15.5" cy="15.5" r="1.6" fill="#fff"/></svg>
<svg class="a" style="left:336px;top:1047px;" width="20" height="16" viewBox="0 0 20 16"><rect x="3" y="4" width="16" height="10" fill="none" stroke="#fff" stroke-width="1.3"/><rect x="4.5" y="5.5" width="11" height="7" fill="#fff"/><path d="M1 0v4M4 0v4M0 4h5" stroke="#fff" stroke-width="1.2"/></svg>
<svg class="a" style="left:368px;top:1048px;" width="17" height="10" viewBox="0 0 17 10"><path d="M1 9l7.5-7.5L16 9" fill="none" stroke="#fff" stroke-width="1.4"/></svg>
<svg class="a" style="left:412px;top:1043px;" width="24" height="24" viewBox="0 0 24 24"><circle cx="12" cy="12" r="12" fill="#d81010"/><circle cx="12" cy="12" r="12" fill="url(#rg)"/><defs><radialGradient id="rg" cx=".35" cy=".3" r=".8"><stop offset="0" stop-color="#ff5050"/><stop offset="1" stop-color="#900"/></radialGradient></defs><path d="M4 7q8 3 16 0l-7 5v8h-2v-8z" fill="#111"/></svg>
<div class="a" style="left:630px;top:1030px;width:51px;height:50px;background:#3b4a55"></div>
<div class="a" style="left:665px;top:1030px;width:16px;height:50px;background:#3f7a44"></div>
<div class="a" style="left:630px;top:1076px;width:51px;height:4px;background:#3ed33e"></div>
<svg class="a" style="left:641px;top:1039px;" width="30" height="30" viewBox="0 0 30 30"><path d="M2 22q0-12 14-14" fill="none" stroke="#e02020" stroke-width="3"/><path d="M4 23q0-10 12-12" fill="none" stroke="#f0c020" stroke-width="3"/><path d="M6 24q1-8 10-10" fill="none" stroke="#30a0e0" stroke-width="3"/><circle cx="18" cy="9" r="7.5" fill="#3a80c8"/><path d="M13 6q4 2 3 5t4 3" fill="#70b040"/><path d="M10 18l14 0-8 11z" fill="#20b040"/></svg>
<div class="a" style="left:692px;top:1076px;width:51px;height:4px;background:#76b9ed"></div>
<svg class="a" style="left:706px;top:1043px;" width="24" height="24" viewBox="0 0 24 24"><path d="M12 2l1.8 2.6 3-1 .5 3.1 3.1.5-1 3L22 12l-2.6 1.8 1 3-3.1.5-.5 3.1-3-1L12 22l-1.8-2.6-3 1-.5-3.1-3.1-.5 1-3L2 12l2.6-1.8-1-3 3.1-.5.5-3.1 3 1z" fill="#fff"/><circle cx="12" cy="12" r="4.2" fill="#1d2d38"/></svg>
<svg class="a" style="left:765px;top:1040px;" width="31" height="30" viewBox="0 0 31 30"><path d="M0 0h9l6 11 6-11h10v30h-9l-7-12-7 12H0z" fill="#e8e8e8"/><path d="M0 0h9l6 11-8 19H0z" fill="#1aa0e0"/><path d="M9 0h12l-6 11z" fill="#222"/><path d="M3 3l5 24M24 3l-5 24" stroke="#222" stroke-width="2" stroke-dasharray="2 2"/></svg>
<svg class="a" style="left:827px;top:1040px;" width="30" height="30" viewBox="0 0 30 30"><path d="M22 0l8 3.5v23L22 30 8 17l-5 4-3-1.5v-9L3 9l5 4zM22 8l-7 7 7 7z" fill="#8b5cd0"/><path d="M22 0l8 3.5v23L22 30z" fill="#a97ff0"/></svg>
<svg class="a" style="left:891px;top:1040px;" width="23" height="30" viewBox="0 0 23 30"><rect width="23" height="30" rx="2" fill="#5a6570"/><rect x="3" y="3" width="17" height="6" fill="#36b7f0"/><g fill="#e8e8e8"><rect x="3" y="12" width="4.5" height="3.5"/><rect x="9.25" y="12" width="4.5" height="3.5"/><rect x="15.5" y="12" width="4.5" height="3.5"/><rect x="3" y="17.5" width="4.5" height="3.5"/><rect x="9.25" y="17.5" width="4.5" height="3.5"/><rect x="3" y="23" width="4.5" height="3.5"/><rect x="9.25" y="23" width="4.5" height="3.5"/></g><rect x="15.5" y="17.5" width="4.5" height="9" fill="#1f4f90"/></svg>
<div class="a" style="left:936px;top:1030px;width:60px;height:50px;background:#48565f"></div>
<div class="a" style="left:936px;top:1076px;width:60px;height:4px;background:#76b9ed"></div>
<svg class="a" style="left:952px;top:1041px;" width="28" height="28" viewBox="0 0 28 28"><circle cx="14" cy="14" r="14" fill="#db4437"/><path d="M14 14L26.1 7A14 14 0 0 1 14 28z" fill="#fbc02d"/><path d="M14 14v14A14 14 0 0 1 1.9 7z" fill="#0f9d58"/><path d="M14 14L1.9 7A14 14 0 0 1 26.1 7z" fill="#db4437"/><circle cx="14" cy="14" r="6.3" fill="#fff"/><circle cx="14" cy="14" r="5" fill="#4285f4"/></svg>
<svg class="a" style="left:1012px;top:1040px;" width="29" height="29" viewBox="0 0 29 29"><path d="M3 3l22-1 3 3v14l-3 2-22-1z" fill="#d8e0e8"/><rect x="5" y="5" width="19" height="13" fill="#fff"/><path d="M6 13h3l2-5 3 8 2-5h6" fill="none" stroke="#3a8ed8" stroke-width="1.2"/><path d="M8 24h12l3 4H5z" fill="#a0a8b0"/></svg>
<svg class="a" style="left:1075px;top:1040px;" width="30" height="28" viewBox="0 0 30 28"><path d="M0 8L15 0l15 8v20H0z" fill="#1477d4"/><path d="M0 8l15 9 15-9v20H0z" fill="#36a9f0"/><path d="M2 9l13 8 13-8" fill="#fff"/></svg>
<svg class="a" style="left:1137px;top:1040px;" width="30" height="30" viewBox="0 0 30 30"><path d="M7 8V5a8 8 0 0 1 16 0v3" fill="none" stroke="#e0e0e0" stroke-width="2"/><rect x="1" y="8" width="28" height="22" rx="1" fill="#f4f4f4"/><rect x="10" y="14" width="4.5" height="4.5" fill="#f25022"/><rect x="15.5" y="14" width="4.5" height="4.5" fill="#7fba00"/><rect x="10" y="19.5" width="4.5" height="4.5" fill="#00a4ef"/><rect x="15.5" y="19.5" width="4.5" height="4.5" fill="#ffb900"/></svg>
<div class="a" style="left:1188px;top:1076px;width:11px;height:4px;background:#5a8ab8"></div>
<div class="a" style="left:1199px;top:1076px;width:40px;height:4px;background:#76b9ed"></div>
<svg class="a" style="left:1199px;top:1042px;" width="28" height="25" viewBox="0 0 28 25"><path d="M0 2h10l2 2h16v20H0z" fill="#e8a800"/><rect x="0" y="6" width="28" height="18" fill="#ffd55c"/><path d="M6 24v-9h16v9h-4v-5h-8v5z" fill="#3a8ed8"/></svg>
<svg class="a" style="left:1260px;top:1040px;" width="30" height="30" viewBox="0 0 30 30"><circle cx="15" cy="15" r="15" fill="#1e88d8"/><path d="M15 0a15 15 0 0 1 15 15q0 6-7 6-5 0-5-4 0-4 5-4-2-7-9-7-8 0-13 7A15 15 0 0 1 15 0z" fill="#4cd080"/><path d="M2 9q4-6 11-5-6 4-5 11 1 8 9 10-11 2-15-7" fill="#1060b0"/><ellipse cx="17" cy="17" rx="5" ry="4" fill="#1d2d38"/></svg>
<svg class="a" style="left:1331px;top:1043px;" width="20" height="23" viewBox="0 0 20 23"><path d="M1 0v23" stroke="#fff" stroke-width="1.5"/><rect x="0" y="8" width="3" height="5" fill="#fff"/><path d="M8 1v4h12V1M8 22v-4h12v4" fill="none" stroke="#fff" stroke-width="1.5"/><rect x="8" y="6" width="12" height="11" fill="none" stroke="#fff" stroke-width="1.5"/></svg>
<div class="a" style="left:1389px;top:1044px;width:22px;height:22px;border:2.2px solid #fff;border-radius:50%"></div>
<div class="a" style="left:1430px;top:1030px;width:430px;height:50px;background:#f0f0f0;border:1px solid #c8c8c8"></div>
<div class="t" style="right:110px;top:1044px;font-size:19px;color:#202020;direction:rtl">اكتب هنا للبحث</div><svg class="a" style="left:1824px;top:1044px;" width="22" height="22" viewBox="0 0 22 22"><circle cx="13" cy="8.5" r="7" fill="none" stroke="#222" stroke-width="1.6"/><path d="M8 13.5L1 21" stroke="#222" stroke-width="1.8"/></svg>
<svg class="a" style="left:1878px;top:1044px;" width="22" height="22" viewBox="0 0 22 22"><path d="M0 3l9-1.3v8.8H0zM10.5 1.5L22 0v10.5H10.5zM0 11.5h9v8.8L0 19zM10.5 11.5H22V22l-11.5-1.6z" fill="#fff"/></svg>
</body></html>
